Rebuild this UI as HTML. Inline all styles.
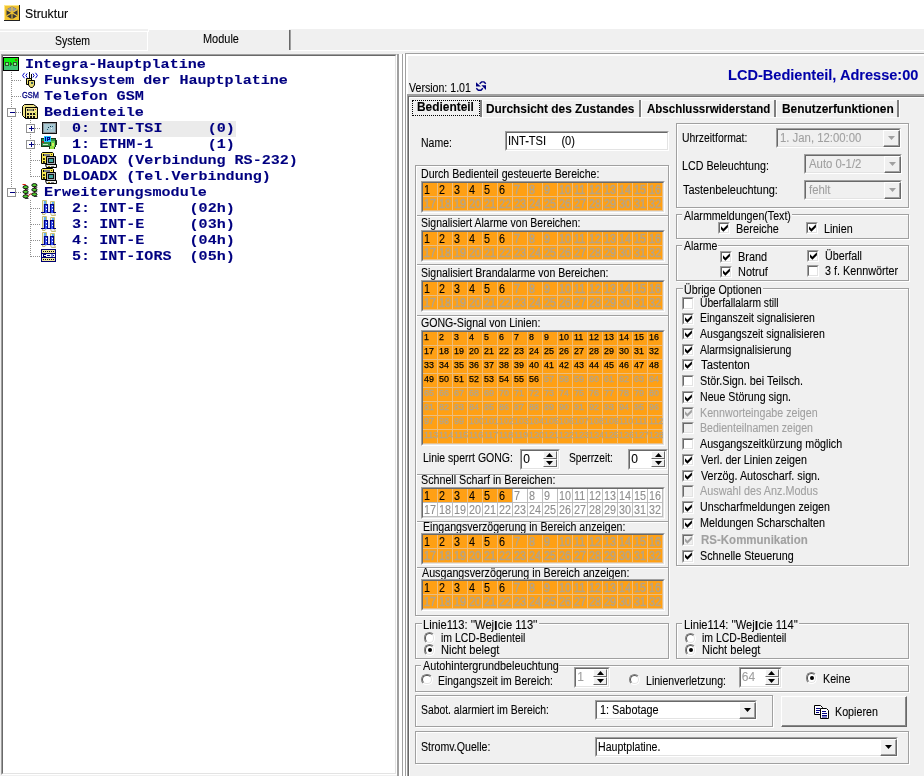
<!DOCTYPE html>
<html><head><meta charset="utf-8"><title>Struktur</title><style>
html,body{margin:0;padding:0}
body{width:924px;height:776px;overflow:hidden;background:#f0f0f0;position:relative;font-family:"Liberation Sans",sans-serif;}
div,span{position:absolute;}
.t{white-space:pre;transform-origin:0 50%;-webkit-text-stroke:0.1px;filter:opacity(.999);}
.g{overflow:hidden;}
.gw{filter:opacity(.999);overflow:hidden;}
.g span{position:absolute;white-space:pre;font-size:12px;line-height:14px;overflow:hidden;-webkit-text-stroke:0.1px;transform:scaleX(0.9);transform-origin:0 0;}

svg{position:absolute;overflow:visible}
</style></head>
<body>
<div style="left:0px;top:0px;width:924px;height:29px;background:#fff"></div>
<svg style="left:4px;top:5px" width="16" height="16" viewBox="0 0 16 16">
<rect x="0" y="0" width="16" height="16" fill="#f2c430"/>
<rect x="15" y="0" width="1" height="16" fill="#222"/><rect x="0" y="15" width="16" height="1" fill="#222"/>
<rect x="0" y="0" width="15" height="1" fill="#ffe88a"/><rect x="0" y="0" width="1" height="15" fill="#ffe88a"/>
<polygon points="8,1.5 13.5,4.5 13.5,11 8,14.2 2.5,11 2.5,4.5" fill="#3a3a3a"/>
<polygon points="8,1.5 13.5,4.5 8,8 2.5,4.5" fill="#9a9a9a"/>
<path d="M8 1.5V14.2M2.5 4.5L13.5 11M13.5 4.5L2.5 11" stroke="#f2c430" stroke-width="1.1" fill="none"/>
</svg>
<span class="t " style="transform:scaleX(1.0009);left:24.599999999999998px;top:7.24px;font-size:12.3px;line-height:15px;color:#000;">Struktur</span>
<div style="left:0px;top:31px;width:148px;height:1px;background:#fff"></div>
<div style="left:147px;top:31px;width:1px;height:19px;background:#fff"></div>
<div style="left:0px;top:50px;width:148px;height:1px;background:#fff"></div>
<div style="left:148px;top:29px;width:141px;height:1px;background:#fff"></div>
<div style="left:148px;top:29px;width:1px;height:3px;background:#fff"></div>
<div style="left:289px;top:30px;width:1px;height:20px;background:#696969"></div>
<div style="left:290px;top:30px;width:1px;height:20px;background:#a0a0a0"></div>
<div style="left:291px;top:50px;width:633px;height:1px;background:#fff"></div>
<span class="t " style="transform:scaleX(0.8747);left:54.900000000000006px;top:33.84px;font-size:12px;line-height:14px;color:#000;">System</span>
<span class="t " style="transform:scaleX(0.9121);left:202.89999999999998px;top:31.84px;font-size:12px;line-height:14px;color:#000;">Module</span>
<div style="left:1px;top:54px;width:396px;height:721px;background:#fff;box-sizing:border-box;border-top:1px solid #a0a0a0;border-left:1px solid #a0a0a0;border-right:1px solid #fff;border-bottom:1px solid #fff;"><div style="left:0;top:0;width:394px;height:719px;box-sizing:border-box;border-top:1px solid #696969;border-left:1px solid #696969;border-right:1px solid #e3e3e3;border-bottom:1px solid #e3e3e3;"></div></div>
<div style="left:397px;top:54px;width:2px;height:722px;background:#a0a0a0"></div>
<div style="left:399px;top:54px;width:3px;height:722px;background:#fff"></div>
<div style="left:402px;top:54px;width:1px;height:722px;background:#a0a0a0"></div>
<div style="left:403px;top:54px;width:2px;height:722px;background:#fff"></div>
<div style="left:405px;top:53px;width:1px;height:723px;background:#a0a0a0"></div>
<div style="left:405px;top:53px;width:519px;height:1px;background:#a0a0a0"></div>
<div style="left:406px;top:54px;width:518px;height:2px;background:#fff"></div>
<div style="left:406px;top:54px;width:2px;height:722px;background:#fff"></div>
<div style="left:60px;top:121px;width:176px;height:15.5px;background:#ebebeb"></div>
<span class="t " style="transform:scaleX(1.1081);left:25px;top:57.38px;font-size:13.6px;line-height:16px;color:#000080;font-family:'Liberation Mono',monospace;font-weight:bold;">Integra-Hauptplatine</span>
<span class="t " style="transform:scaleX(1.1068);left:44px;top:73.38px;font-size:13.6px;line-height:16px;color:#000080;font-family:'Liberation Mono',monospace;font-weight:bold;">Funksystem der Hauptplatine</span>
<span class="t " style="transform:scaleX(1.1122);left:44px;top:89.38px;font-size:13.6px;line-height:16px;color:#000080;font-family:'Liberation Mono',monospace;font-weight:bold;">Telefon GSM</span>
<span class="t " style="transform:scaleX(1.1122);left:44px;top:105.38px;font-size:13.6px;line-height:16px;color:#000080;font-family:'Liberation Mono',monospace;font-weight:bold;">Bedienteile</span>
<span class="t " style="transform:scaleX(1.1087);left:72px;top:121.38px;font-size:13.6px;line-height:16px;color:#000080;font-family:'Liberation Mono',monospace;font-weight:bold;">0: INT-TSI     (0)</span>
<span class="t " style="transform:scaleX(1.1087);left:72px;top:137.38px;font-size:13.6px;line-height:16px;color:#000080;font-family:'Liberation Mono',monospace;font-weight:bold;">1: ETHM-1      (1)</span>
<span class="t " style="transform:scaleX(1.1070);left:63px;top:153.38px;font-size:13.6px;line-height:16px;color:#000080;font-family:'Liberation Mono',monospace;font-weight:bold;">DLOADX (Verbindung RS-232)</span>
<span class="t " style="transform:scaleX(1.1075);left:63px;top:169.38px;font-size:13.6px;line-height:16px;color:#000080;font-family:'Liberation Mono',monospace;font-weight:bold;">DLOADX (Tel.Verbindung)</span>
<span class="t " style="transform:scaleX(1.1087);left:44px;top:185.38px;font-size:13.6px;line-height:16px;color:#000080;font-family:'Liberation Mono',monospace;font-weight:bold;">Erweiterungsmodule</span>
<span class="t " style="transform:scaleX(1.1087);left:72px;top:201.38px;font-size:13.6px;line-height:16px;color:#000080;font-family:'Liberation Mono',monospace;font-weight:bold;">2: INT-E     (02h)</span>
<span class="t " style="transform:scaleX(1.1087);left:72px;top:217.38px;font-size:13.6px;line-height:16px;color:#000080;font-family:'Liberation Mono',monospace;font-weight:bold;">3: INT-E     (03h)</span>
<span class="t " style="transform:scaleX(1.1087);left:72px;top:233.38px;font-size:13.6px;line-height:16px;color:#000080;font-family:'Liberation Mono',monospace;font-weight:bold;">4: INT-E     (04h)</span>
<span class="t " style="transform:scaleX(1.1087);left:72px;top:249.38px;font-size:13.6px;line-height:16px;color:#000080;font-family:'Liberation Mono',monospace;font-weight:bold;">5: INT-IORS  (05h)</span>
<div style="left:11px;top:72px;width:1px;height:116px;background:repeating-linear-gradient(to bottom,#909090 0 1px,transparent 1px 2px)"></div>
<div style="left:12px;top:80px;width:10px;height:1px;background:repeating-linear-gradient(to right,#909090 0 1px,transparent 1px 2px)"></div>
<div style="left:12px;top:96px;width:10px;height:1px;background:repeating-linear-gradient(to right,#909090 0 1px,transparent 1px 2px)"></div>
<div style="left:16px;top:112px;width:6px;height:1px;background:repeating-linear-gradient(to right,#909090 0 1px,transparent 1px 2px)"></div>
<div style="left:16px;top:192px;width:6px;height:1px;background:repeating-linear-gradient(to right,#909090 0 1px,transparent 1px 2px)"></div>
<div style="left:30px;top:120px;width:1px;height:57px;background:repeating-linear-gradient(to bottom,#909090 0 1px,transparent 1px 2px)"></div>
<div style="left:35px;top:128px;width:6px;height:1px;background:repeating-linear-gradient(to right,#909090 0 1px,transparent 1px 2px)"></div>
<div style="left:35px;top:144px;width:6px;height:1px;background:repeating-linear-gradient(to right,#909090 0 1px,transparent 1px 2px)"></div>
<div style="left:31px;top:160px;width:10px;height:1px;background:repeating-linear-gradient(to right,#909090 0 1px,transparent 1px 2px)"></div>
<div style="left:31px;top:176px;width:10px;height:1px;background:repeating-linear-gradient(to right,#909090 0 1px,transparent 1px 2px)"></div>
<div style="left:30px;top:200px;width:1px;height:57px;background:repeating-linear-gradient(to bottom,#909090 0 1px,transparent 1px 2px)"></div>
<div style="left:31px;top:208px;width:10px;height:1px;background:repeating-linear-gradient(to right,#909090 0 1px,transparent 1px 2px)"></div>
<div style="left:31px;top:224px;width:10px;height:1px;background:repeating-linear-gradient(to right,#909090 0 1px,transparent 1px 2px)"></div>
<div style="left:31px;top:240px;width:10px;height:1px;background:repeating-linear-gradient(to right,#909090 0 1px,transparent 1px 2px)"></div>
<div style="left:31px;top:256px;width:10px;height:1px;background:repeating-linear-gradient(to right,#909090 0 1px,transparent 1px 2px)"></div>
<div style="left:7px;top:108px;width:9px;height:9px;box-sizing:border-box;border:1px solid #919191;background:#fff"><div style="left:2px;top:3px;width:5px;height:1px;background:#000080"></div></div>
<div style="left:7px;top:188px;width:9px;height:9px;box-sizing:border-box;border:1px solid #919191;background:#fff"><div style="left:2px;top:3px;width:5px;height:1px;background:#000080"></div></div>
<div style="left:26px;top:124px;width:9px;height:9px;box-sizing:border-box;border:1px solid #919191;background:#fff"><div style="left:2px;top:3px;width:5px;height:1px;background:#000080"></div><div style="left:4px;top:1px;width:1px;height:5px;background:#000080"></div></div>
<div style="left:26px;top:140px;width:9px;height:9px;box-sizing:border-box;border:1px solid #919191;background:#fff"><div style="left:2px;top:3px;width:5px;height:1px;background:#000080"></div><div style="left:4px;top:1px;width:1px;height:5px;background:#000080"></div></div>
<span class="t " style="transform:scaleX(0.8835);left:408.7px;top:80.84px;font-size:12px;line-height:14px;color:#000;">Version: 1.01</span>
<svg style="left:476px;top:81px" width="10" height="10" viewBox="0 0 10 10">
<polygon points="0,1.2 0,5.6 4.8,5.6" fill="#000080"/>
<polygon points="5.4,4.3 10,4.3 10,9" fill="#000080"/>
<path d="M3.6 2.8L5.6 0.9H8L9.8 2.8" stroke="#000080" stroke-width="1.4" fill="none"/>
<path d="M0.3 7.3L2.3 9.3H5L6.8 7.3" stroke="#000080" stroke-width="1.4" fill="none"/>
</svg>
<span class="t " style="transform:scaleX(1.0399);left:727.7px;top:66.65px;font-size:14px;line-height:17px;color:#0000aa;font-weight:bold;">LCD-Bedienteil, Adresse:00</span>
<div style="left:407px;top:94px;width:517px;height:2px;background:#a0a0a0"></div>
<div style="left:408px;top:96px;width:516px;height:1px;background:#787878"></div>
<div style="left:409px;top:97px;width:515px;height:1px;background:#fff"></div>
<div style="left:407px;top:94px;width:1px;height:682px;background:#a0a0a0"></div>
<div style="left:408px;top:96px;width:1px;height:680px;background:#696969"></div>
<div style="left:409px;top:97px;width:1px;height:679px;background:#fff"></div>
<div style="left:483px;top:100px;width:414px;height:1px;background:#f9f9f9"></div>
<div style="left:483px;top:117px;width:414px;height:1px;background:#fbfbfb"></div>
<div style="left:480px;top:100px;width:2px;height:17px;background:#808080"></div>
<div style="left:482px;top:100px;width:1px;height:18px;background:#fff"></div>
<div style="left:639px;top:100px;width:2px;height:17px;background:#808080"></div>
<div style="left:641px;top:100px;width:1px;height:18px;background:#fff"></div>
<div style="left:774px;top:100px;width:2px;height:17px;background:#808080"></div>
<div style="left:776px;top:100px;width:1px;height:18px;background:#fff"></div>
<div style="left:897px;top:100px;width:2px;height:17px;background:#808080"></div>
<div style="left:899px;top:100px;width:1px;height:18px;background:#fff"></div>
<span class="t " style="transform:scaleX(0.9920);left:417.2px;top:99.84px;font-size:12px;line-height:14px;color:#000;font-weight:bold;">Bedienteil</span>
<span class="t " style="transform:scaleX(0.9890);left:486.2px;top:101.84px;font-size:12px;line-height:14px;color:#000;font-weight:bold;">Durchsicht des Zustandes</span>
<span class="t " style="transform:scaleX(0.9588);left:647.2px;top:101.84px;font-size:12px;line-height:14px;color:#000;font-weight:bold;">Abschlussrwiderstand</span>
<span class="t " style="transform:scaleX(0.9914);left:781.6px;top:101.84px;font-size:12px;line-height:14px;color:#000;font-weight:bold;">Benutzerfunktionen</span>
<div style="left:412px;top:100px;width:68px;height:16px;box-sizing:border-box;border:1px dotted #000"></div>
<span class="t " style="transform:scaleX(0.8743);left:421.2px;top:135.84px;font-size:12px;line-height:14px;color:#000;">Name:</span>
<div style="left:505px;top:131px;width:164px;height:20px;background:#fff;box-sizing:border-box;border-top:1px solid #a0a0a0;border-left:1px solid #a0a0a0;border-right:1px solid #fff;border-bottom:1px solid #fff;"><div style="left:0;top:0;width:162px;height:18px;box-sizing:border-box;border-top:1px solid #696969;border-left:1px solid #696969;border-right:1px solid #e3e3e3;border-bottom:1px solid #e3e3e3;"></div></div>
<span class="t " style="transform:scaleX(0.9206);left:508.2px;top:133.84px;font-size:12px;line-height:14px;color:#000;">INT-TSI     (0)</span>
<div style="left:415px;top:165px;width:254px;height:451px;border:1px solid #a0a0a0;box-sizing:border-box"></div>
<div style="left:416px;top:166px;width:254px;height:451px;border:1px solid #fff;box-sizing:border-box"></div>
<div style="left:415px;top:165px;width:254px;height:451px;border:1px solid #a0a0a0;box-sizing:border-box"></div>
<div style="left:417px;top:215px;width:251px;height:1px;background:#a0a0a0"></div>
<div style="left:417px;top:216px;width:251px;height:1px;background:#fff"></div>
<div style="left:417px;top:264px;width:251px;height:1px;background:#a0a0a0"></div>
<div style="left:417px;top:265px;width:251px;height:1px;background:#fff"></div>
<div style="left:417px;top:315px;width:251px;height:1px;background:#a0a0a0"></div>
<div style="left:417px;top:316px;width:251px;height:1px;background:#fff"></div>
<div style="left:417px;top:474px;width:251px;height:1px;background:#a0a0a0"></div>
<div style="left:417px;top:475px;width:251px;height:1px;background:#fff"></div>
<div style="left:417px;top:521px;width:251px;height:1px;background:#a0a0a0"></div>
<div style="left:417px;top:522px;width:251px;height:1px;background:#fff"></div>
<div style="left:417px;top:566.5px;width:251px;height:1px;background:#a0a0a0"></div>
<div style="left:417px;top:567.5px;width:251px;height:1px;background:#fff"></div>
<span class="t " style="transform:scaleX(0.8826);left:421.2px;top:166.84px;font-size:12px;line-height:14px;color:#000;">Durch Bedienteil gesteuerte Bereiche:</span>
<div style="left:421px;top:181px;width:244px;height:32px;background:#ffa014;box-sizing:border-box;border-top:1px solid #a0a0a0;border-left:1px solid #a0a0a0;border-right:1px solid #fff;border-bottom:1px solid #fff;"><div style="left:0;top:0;width:242px;height:30px;box-sizing:border-box;border-top:1px solid #696969;border-left:1px solid #696969;border-right:1px solid #e3e3e3;border-bottom:1px solid #e3e3e3;"></div><div class="g" style="left:1px;top:1px;width:240px;height:28px;background:repeating-linear-gradient(to right,transparent 0 14px,#ebbd80 14px 15px),repeating-linear-gradient(to bottom,transparent 0 13px,#ebbd80 13px 14px),#ffa014;"><div class="gw" style="left:0;top:0;width:240px;height:28px"><span style="left:1.2px;top:1px;width:14.4px;height:13px;line-height:13px;color:#000;">1</span><span style="left:16.2px;top:1px;width:14.4px;height:13px;line-height:13px;color:#000;">2</span><span style="left:31.2px;top:1px;width:14.4px;height:13px;line-height:13px;color:#000;">3</span><span style="left:46.2px;top:1px;width:14.4px;height:13px;line-height:13px;color:#000;">4</span><span style="left:61.2px;top:1px;width:14.4px;height:13px;line-height:13px;color:#000;">5</span><span style="left:76.2px;top:1px;width:14.4px;height:13px;line-height:13px;color:#000;">6</span><span style="left:91.2px;top:1px;width:14.4px;height:13px;line-height:13px;color:#b6a486;-webkit-text-stroke:0.45px;">7</span><span style="left:106.2px;top:1px;width:14.4px;height:13px;line-height:13px;color:#b6a486;-webkit-text-stroke:0.45px;">8</span><span style="left:121.2px;top:1px;width:14.4px;height:13px;line-height:13px;color:#b6a486;-webkit-text-stroke:0.45px;">9</span><span style="left:136.2px;top:1px;width:14.4px;height:13px;line-height:13px;color:#b6a486;-webkit-text-stroke:0.45px;">10</span><span style="left:151.2px;top:1px;width:14.4px;height:13px;line-height:13px;color:#b6a486;-webkit-text-stroke:0.45px;">11</span><span style="left:166.2px;top:1px;width:14.4px;height:13px;line-height:13px;color:#b6a486;-webkit-text-stroke:0.45px;">12</span><span style="left:181.2px;top:1px;width:14.4px;height:13px;line-height:13px;color:#b6a486;-webkit-text-stroke:0.45px;">13</span><span style="left:196.2px;top:1px;width:14.4px;height:13px;line-height:13px;color:#b6a486;-webkit-text-stroke:0.45px;">14</span><span style="left:211.2px;top:1px;width:14.4px;height:13px;line-height:13px;color:#b6a486;-webkit-text-stroke:0.45px;">15</span><span style="left:226.2px;top:1px;width:14.4px;height:13px;line-height:13px;color:#b6a486;-webkit-text-stroke:0.45px;">16</span><span style="left:1.2px;top:15px;width:14.4px;height:13px;line-height:13px;color:#b6a486;-webkit-text-stroke:0.45px;">17</span><span style="left:16.2px;top:15px;width:14.4px;height:13px;line-height:13px;color:#b6a486;-webkit-text-stroke:0.45px;">18</span><span style="left:31.2px;top:15px;width:14.4px;height:13px;line-height:13px;color:#b6a486;-webkit-text-stroke:0.45px;">19</span><span style="left:46.2px;top:15px;width:14.4px;height:13px;line-height:13px;color:#b6a486;-webkit-text-stroke:0.45px;">20</span><span style="left:61.2px;top:15px;width:14.4px;height:13px;line-height:13px;color:#b6a486;-webkit-text-stroke:0.45px;">21</span><span style="left:76.2px;top:15px;width:14.4px;height:13px;line-height:13px;color:#b6a486;-webkit-text-stroke:0.45px;">22</span><span style="left:91.2px;top:15px;width:14.4px;height:13px;line-height:13px;color:#b6a486;-webkit-text-stroke:0.45px;">23</span><span style="left:106.2px;top:15px;width:14.4px;height:13px;line-height:13px;color:#b6a486;-webkit-text-stroke:0.45px;">24</span><span style="left:121.2px;top:15px;width:14.4px;height:13px;line-height:13px;color:#b6a486;-webkit-text-stroke:0.45px;">25</span><span style="left:136.2px;top:15px;width:14.4px;height:13px;line-height:13px;color:#b6a486;-webkit-text-stroke:0.45px;">26</span><span style="left:151.2px;top:15px;width:14.4px;height:13px;line-height:13px;color:#b6a486;-webkit-text-stroke:0.45px;">27</span><span style="left:166.2px;top:15px;width:14.4px;height:13px;line-height:13px;color:#b6a486;-webkit-text-stroke:0.45px;">28</span><span style="left:181.2px;top:15px;width:14.4px;height:13px;line-height:13px;color:#b6a486;-webkit-text-stroke:0.45px;">29</span><span style="left:196.2px;top:15px;width:14.4px;height:13px;line-height:13px;color:#b6a486;-webkit-text-stroke:0.45px;">30</span><span style="left:211.2px;top:15px;width:14.4px;height:13px;line-height:13px;color:#b6a486;-webkit-text-stroke:0.45px;">31</span><span style="left:226.2px;top:15px;width:14.4px;height:13px;line-height:13px;color:#b6a486;-webkit-text-stroke:0.45px;">32</span></div></div></div>
<span class="t " style="transform:scaleX(0.8722);left:421.2px;top:215.84px;font-size:12px;line-height:14px;color:#000;">Signalisiert Alarme von Bereichen:</span>
<div style="left:421px;top:230px;width:244px;height:32px;background:#ffa014;box-sizing:border-box;border-top:1px solid #a0a0a0;border-left:1px solid #a0a0a0;border-right:1px solid #fff;border-bottom:1px solid #fff;"><div style="left:0;top:0;width:242px;height:30px;box-sizing:border-box;border-top:1px solid #696969;border-left:1px solid #696969;border-right:1px solid #e3e3e3;border-bottom:1px solid #e3e3e3;"></div><div class="g" style="left:1px;top:1px;width:240px;height:28px;background:repeating-linear-gradient(to right,transparent 0 14px,#ebbd80 14px 15px),repeating-linear-gradient(to bottom,transparent 0 13px,#ebbd80 13px 14px),#ffa014;"><div class="gw" style="left:0;top:0;width:240px;height:28px"><span style="left:1.2px;top:1px;width:14.4px;height:13px;line-height:13px;color:#000;">1</span><span style="left:16.2px;top:1px;width:14.4px;height:13px;line-height:13px;color:#000;">2</span><span style="left:31.2px;top:1px;width:14.4px;height:13px;line-height:13px;color:#000;">3</span><span style="left:46.2px;top:1px;width:14.4px;height:13px;line-height:13px;color:#000;">4</span><span style="left:61.2px;top:1px;width:14.4px;height:13px;line-height:13px;color:#000;">5</span><span style="left:76.2px;top:1px;width:14.4px;height:13px;line-height:13px;color:#000;">6</span><span style="left:91.2px;top:1px;width:14.4px;height:13px;line-height:13px;color:#b6a486;-webkit-text-stroke:0.45px;">7</span><span style="left:106.2px;top:1px;width:14.4px;height:13px;line-height:13px;color:#b6a486;-webkit-text-stroke:0.45px;">8</span><span style="left:121.2px;top:1px;width:14.4px;height:13px;line-height:13px;color:#b6a486;-webkit-text-stroke:0.45px;">9</span><span style="left:136.2px;top:1px;width:14.4px;height:13px;line-height:13px;color:#b6a486;-webkit-text-stroke:0.45px;">10</span><span style="left:151.2px;top:1px;width:14.4px;height:13px;line-height:13px;color:#b6a486;-webkit-text-stroke:0.45px;">11</span><span style="left:166.2px;top:1px;width:14.4px;height:13px;line-height:13px;color:#b6a486;-webkit-text-stroke:0.45px;">12</span><span style="left:181.2px;top:1px;width:14.4px;height:13px;line-height:13px;color:#b6a486;-webkit-text-stroke:0.45px;">13</span><span style="left:196.2px;top:1px;width:14.4px;height:13px;line-height:13px;color:#b6a486;-webkit-text-stroke:0.45px;">14</span><span style="left:211.2px;top:1px;width:14.4px;height:13px;line-height:13px;color:#b6a486;-webkit-text-stroke:0.45px;">15</span><span style="left:226.2px;top:1px;width:14.4px;height:13px;line-height:13px;color:#b6a486;-webkit-text-stroke:0.45px;">16</span><span style="left:1.2px;top:15px;width:14.4px;height:13px;line-height:13px;color:#b6a486;-webkit-text-stroke:0.45px;">17</span><span style="left:16.2px;top:15px;width:14.4px;height:13px;line-height:13px;color:#b6a486;-webkit-text-stroke:0.45px;">18</span><span style="left:31.2px;top:15px;width:14.4px;height:13px;line-height:13px;color:#b6a486;-webkit-text-stroke:0.45px;">19</span><span style="left:46.2px;top:15px;width:14.4px;height:13px;line-height:13px;color:#b6a486;-webkit-text-stroke:0.45px;">20</span><span style="left:61.2px;top:15px;width:14.4px;height:13px;line-height:13px;color:#b6a486;-webkit-text-stroke:0.45px;">21</span><span style="left:76.2px;top:15px;width:14.4px;height:13px;line-height:13px;color:#b6a486;-webkit-text-stroke:0.45px;">22</span><span style="left:91.2px;top:15px;width:14.4px;height:13px;line-height:13px;color:#b6a486;-webkit-text-stroke:0.45px;">23</span><span style="left:106.2px;top:15px;width:14.4px;height:13px;line-height:13px;color:#b6a486;-webkit-text-stroke:0.45px;">24</span><span style="left:121.2px;top:15px;width:14.4px;height:13px;line-height:13px;color:#b6a486;-webkit-text-stroke:0.45px;">25</span><span style="left:136.2px;top:15px;width:14.4px;height:13px;line-height:13px;color:#b6a486;-webkit-text-stroke:0.45px;">26</span><span style="left:151.2px;top:15px;width:14.4px;height:13px;line-height:13px;color:#b6a486;-webkit-text-stroke:0.45px;">27</span><span style="left:166.2px;top:15px;width:14.4px;height:13px;line-height:13px;color:#b6a486;-webkit-text-stroke:0.45px;">28</span><span style="left:181.2px;top:15px;width:14.4px;height:13px;line-height:13px;color:#b6a486;-webkit-text-stroke:0.45px;">29</span><span style="left:196.2px;top:15px;width:14.4px;height:13px;line-height:13px;color:#b6a486;-webkit-text-stroke:0.45px;">30</span><span style="left:211.2px;top:15px;width:14.4px;height:13px;line-height:13px;color:#b6a486;-webkit-text-stroke:0.45px;">31</span><span style="left:226.2px;top:15px;width:14.4px;height:13px;line-height:13px;color:#b6a486;-webkit-text-stroke:0.45px;">32</span></div></div></div>
<span class="t " style="transform:scaleX(0.8752);left:421.2px;top:265.84px;font-size:12px;line-height:14px;color:#000;">Signalisiert Brandalarme von Bereichen:</span>
<div style="left:421px;top:280px;width:244px;height:32px;background:#ffa014;box-sizing:border-box;border-top:1px solid #a0a0a0;border-left:1px solid #a0a0a0;border-right:1px solid #fff;border-bottom:1px solid #fff;"><div style="left:0;top:0;width:242px;height:30px;box-sizing:border-box;border-top:1px solid #696969;border-left:1px solid #696969;border-right:1px solid #e3e3e3;border-bottom:1px solid #e3e3e3;"></div><div class="g" style="left:1px;top:1px;width:240px;height:28px;background:repeating-linear-gradient(to right,transparent 0 14px,#ebbd80 14px 15px),repeating-linear-gradient(to bottom,transparent 0 13px,#ebbd80 13px 14px),#ffa014;"><div class="gw" style="left:0;top:0;width:240px;height:28px"><span style="left:1.2px;top:1px;width:14.4px;height:13px;line-height:13px;color:#000;">1</span><span style="left:16.2px;top:1px;width:14.4px;height:13px;line-height:13px;color:#000;">2</span><span style="left:31.2px;top:1px;width:14.4px;height:13px;line-height:13px;color:#000;">3</span><span style="left:46.2px;top:1px;width:14.4px;height:13px;line-height:13px;color:#000;">4</span><span style="left:61.2px;top:1px;width:14.4px;height:13px;line-height:13px;color:#000;">5</span><span style="left:76.2px;top:1px;width:14.4px;height:13px;line-height:13px;color:#000;">6</span><span style="left:91.2px;top:1px;width:14.4px;height:13px;line-height:13px;color:#b6a486;-webkit-text-stroke:0.45px;">7</span><span style="left:106.2px;top:1px;width:14.4px;height:13px;line-height:13px;color:#b6a486;-webkit-text-stroke:0.45px;">8</span><span style="left:121.2px;top:1px;width:14.4px;height:13px;line-height:13px;color:#b6a486;-webkit-text-stroke:0.45px;">9</span><span style="left:136.2px;top:1px;width:14.4px;height:13px;line-height:13px;color:#b6a486;-webkit-text-stroke:0.45px;">10</span><span style="left:151.2px;top:1px;width:14.4px;height:13px;line-height:13px;color:#b6a486;-webkit-text-stroke:0.45px;">11</span><span style="left:166.2px;top:1px;width:14.4px;height:13px;line-height:13px;color:#b6a486;-webkit-text-stroke:0.45px;">12</span><span style="left:181.2px;top:1px;width:14.4px;height:13px;line-height:13px;color:#b6a486;-webkit-text-stroke:0.45px;">13</span><span style="left:196.2px;top:1px;width:14.4px;height:13px;line-height:13px;color:#b6a486;-webkit-text-stroke:0.45px;">14</span><span style="left:211.2px;top:1px;width:14.4px;height:13px;line-height:13px;color:#b6a486;-webkit-text-stroke:0.45px;">15</span><span style="left:226.2px;top:1px;width:14.4px;height:13px;line-height:13px;color:#b6a486;-webkit-text-stroke:0.45px;">16</span><span style="left:1.2px;top:15px;width:14.4px;height:13px;line-height:13px;color:#b6a486;-webkit-text-stroke:0.45px;">17</span><span style="left:16.2px;top:15px;width:14.4px;height:13px;line-height:13px;color:#b6a486;-webkit-text-stroke:0.45px;">18</span><span style="left:31.2px;top:15px;width:14.4px;height:13px;line-height:13px;color:#b6a486;-webkit-text-stroke:0.45px;">19</span><span style="left:46.2px;top:15px;width:14.4px;height:13px;line-height:13px;color:#b6a486;-webkit-text-stroke:0.45px;">20</span><span style="left:61.2px;top:15px;width:14.4px;height:13px;line-height:13px;color:#b6a486;-webkit-text-stroke:0.45px;">21</span><span style="left:76.2px;top:15px;width:14.4px;height:13px;line-height:13px;color:#b6a486;-webkit-text-stroke:0.45px;">22</span><span style="left:91.2px;top:15px;width:14.4px;height:13px;line-height:13px;color:#b6a486;-webkit-text-stroke:0.45px;">23</span><span style="left:106.2px;top:15px;width:14.4px;height:13px;line-height:13px;color:#b6a486;-webkit-text-stroke:0.45px;">24</span><span style="left:121.2px;top:15px;width:14.4px;height:13px;line-height:13px;color:#b6a486;-webkit-text-stroke:0.45px;">25</span><span style="left:136.2px;top:15px;width:14.4px;height:13px;line-height:13px;color:#b6a486;-webkit-text-stroke:0.45px;">26</span><span style="left:151.2px;top:15px;width:14.4px;height:13px;line-height:13px;color:#b6a486;-webkit-text-stroke:0.45px;">27</span><span style="left:166.2px;top:15px;width:14.4px;height:13px;line-height:13px;color:#b6a486;-webkit-text-stroke:0.45px;">28</span><span style="left:181.2px;top:15px;width:14.4px;height:13px;line-height:13px;color:#b6a486;-webkit-text-stroke:0.45px;">29</span><span style="left:196.2px;top:15px;width:14.4px;height:13px;line-height:13px;color:#b6a486;-webkit-text-stroke:0.45px;">30</span><span style="left:211.2px;top:15px;width:14.4px;height:13px;line-height:13px;color:#b6a486;-webkit-text-stroke:0.45px;">31</span><span style="left:226.2px;top:15px;width:14.4px;height:13px;line-height:13px;color:#b6a486;-webkit-text-stroke:0.45px;">32</span></div></div></div>
<span class="t " style="transform:scaleX(0.8818);left:421.2px;top:315.84px;font-size:12px;line-height:14px;color:#000;">GONG-Signal von Linien:</span>
<div style="left:421px;top:330px;width:244px;height:116px;background:#ffa014;box-sizing:border-box;border-top:1px solid #a0a0a0;border-left:1px solid #a0a0a0;border-right:1px solid #fff;border-bottom:1px solid #fff;"><div style="left:0;top:0;width:242px;height:114px;box-sizing:border-box;border-top:1px solid #696969;border-left:1px solid #696969;border-right:1px solid #e3e3e3;border-bottom:1px solid #e3e3e3;"></div><div class="g" style="left:1px;top:1px;width:240px;height:112px;background:repeating-linear-gradient(to right,transparent 0 14px,#ebbd80 14px 15px),repeating-linear-gradient(to bottom,transparent 0 13px,#ebbd80 13px 14px),#ffa014;"><div class="gw" style="left:0;top:0;width:240px;height:112px"><span style="left:1.2px;top:-1.8px;width:14.4px;height:13px;line-height:13px;color:#000;font-size:9.9px;transform:scaleX(0.9);width:15.6px;-webkit-text-stroke:0.25px;">1</span><span style="left:16.2px;top:-1.8px;width:14.4px;height:13px;line-height:13px;color:#000;font-size:9.9px;transform:scaleX(0.9);width:15.6px;-webkit-text-stroke:0.25px;">2</span><span style="left:31.2px;top:-1.8px;width:14.4px;height:13px;line-height:13px;color:#000;font-size:9.9px;transform:scaleX(0.9);width:15.6px;-webkit-text-stroke:0.25px;">3</span><span style="left:46.2px;top:-1.8px;width:14.4px;height:13px;line-height:13px;color:#000;font-size:9.9px;transform:scaleX(0.9);width:15.6px;-webkit-text-stroke:0.25px;">4</span><span style="left:61.2px;top:-1.8px;width:14.4px;height:13px;line-height:13px;color:#000;font-size:9.9px;transform:scaleX(0.9);width:15.6px;-webkit-text-stroke:0.25px;">5</span><span style="left:76.2px;top:-1.8px;width:14.4px;height:13px;line-height:13px;color:#000;font-size:9.9px;transform:scaleX(0.9);width:15.6px;-webkit-text-stroke:0.25px;">6</span><span style="left:91.2px;top:-1.8px;width:14.4px;height:13px;line-height:13px;color:#000;font-size:9.9px;transform:scaleX(0.9);width:15.6px;-webkit-text-stroke:0.25px;">7</span><span style="left:106.2px;top:-1.8px;width:14.4px;height:13px;line-height:13px;color:#000;font-size:9.9px;transform:scaleX(0.9);width:15.6px;-webkit-text-stroke:0.25px;">8</span><span style="left:121.2px;top:-1.8px;width:14.4px;height:13px;line-height:13px;color:#000;font-size:9.9px;transform:scaleX(0.9);width:15.6px;-webkit-text-stroke:0.25px;">9</span><span style="left:136.2px;top:-1.8px;width:14.4px;height:13px;line-height:13px;color:#000;font-size:9.9px;transform:scaleX(0.9);width:15.6px;-webkit-text-stroke:0.25px;">10</span><span style="left:151.2px;top:-1.8px;width:14.4px;height:13px;line-height:13px;color:#000;font-size:9.9px;transform:scaleX(0.9);width:15.6px;-webkit-text-stroke:0.25px;">11</span><span style="left:166.2px;top:-1.8px;width:14.4px;height:13px;line-height:13px;color:#000;font-size:9.9px;transform:scaleX(0.9);width:15.6px;-webkit-text-stroke:0.25px;">12</span><span style="left:181.2px;top:-1.8px;width:14.4px;height:13px;line-height:13px;color:#000;font-size:9.9px;transform:scaleX(0.9);width:15.6px;-webkit-text-stroke:0.25px;">13</span><span style="left:196.2px;top:-1.8px;width:14.4px;height:13px;line-height:13px;color:#000;font-size:9.9px;transform:scaleX(0.9);width:15.6px;-webkit-text-stroke:0.25px;">14</span><span style="left:211.2px;top:-1.8px;width:14.4px;height:13px;line-height:13px;color:#000;font-size:9.9px;transform:scaleX(0.9);width:15.6px;-webkit-text-stroke:0.25px;">15</span><span style="left:226.2px;top:-1.8px;width:14.4px;height:13px;line-height:13px;color:#000;font-size:9.9px;transform:scaleX(0.9);width:15.6px;-webkit-text-stroke:0.25px;">16</span><span style="left:1.2px;top:12.2px;width:14.4px;height:13px;line-height:13px;color:#000;font-size:9.9px;transform:scaleX(0.9);width:15.6px;-webkit-text-stroke:0.25px;">17</span><span style="left:16.2px;top:12.2px;width:14.4px;height:13px;line-height:13px;color:#000;font-size:9.9px;transform:scaleX(0.9);width:15.6px;-webkit-text-stroke:0.25px;">18</span><span style="left:31.2px;top:12.2px;width:14.4px;height:13px;line-height:13px;color:#000;font-size:9.9px;transform:scaleX(0.9);width:15.6px;-webkit-text-stroke:0.25px;">19</span><span style="left:46.2px;top:12.2px;width:14.4px;height:13px;line-height:13px;color:#000;font-size:9.9px;transform:scaleX(0.9);width:15.6px;-webkit-text-stroke:0.25px;">20</span><span style="left:61.2px;top:12.2px;width:14.4px;height:13px;line-height:13px;color:#000;font-size:9.9px;transform:scaleX(0.9);width:15.6px;-webkit-text-stroke:0.25px;">21</span><span style="left:76.2px;top:12.2px;width:14.4px;height:13px;line-height:13px;color:#000;font-size:9.9px;transform:scaleX(0.9);width:15.6px;-webkit-text-stroke:0.25px;">22</span><span style="left:91.2px;top:12.2px;width:14.4px;height:13px;line-height:13px;color:#000;font-size:9.9px;transform:scaleX(0.9);width:15.6px;-webkit-text-stroke:0.25px;">23</span><span style="left:106.2px;top:12.2px;width:14.4px;height:13px;line-height:13px;color:#000;font-size:9.9px;transform:scaleX(0.9);width:15.6px;-webkit-text-stroke:0.25px;">24</span><span style="left:121.2px;top:12.2px;width:14.4px;height:13px;line-height:13px;color:#000;font-size:9.9px;transform:scaleX(0.9);width:15.6px;-webkit-text-stroke:0.25px;">25</span><span style="left:136.2px;top:12.2px;width:14.4px;height:13px;line-height:13px;color:#000;font-size:9.9px;transform:scaleX(0.9);width:15.6px;-webkit-text-stroke:0.25px;">26</span><span style="left:151.2px;top:12.2px;width:14.4px;height:13px;line-height:13px;color:#000;font-size:9.9px;transform:scaleX(0.9);width:15.6px;-webkit-text-stroke:0.25px;">27</span><span style="left:166.2px;top:12.2px;width:14.4px;height:13px;line-height:13px;color:#000;font-size:9.9px;transform:scaleX(0.9);width:15.6px;-webkit-text-stroke:0.25px;">28</span><span style="left:181.2px;top:12.2px;width:14.4px;height:13px;line-height:13px;color:#000;font-size:9.9px;transform:scaleX(0.9);width:15.6px;-webkit-text-stroke:0.25px;">29</span><span style="left:196.2px;top:12.2px;width:14.4px;height:13px;line-height:13px;color:#000;font-size:9.9px;transform:scaleX(0.9);width:15.6px;-webkit-text-stroke:0.25px;">30</span><span style="left:211.2px;top:12.2px;width:14.4px;height:13px;line-height:13px;color:#000;font-size:9.9px;transform:scaleX(0.9);width:15.6px;-webkit-text-stroke:0.25px;">31</span><span style="left:226.2px;top:12.2px;width:14.4px;height:13px;line-height:13px;color:#000;font-size:9.9px;transform:scaleX(0.9);width:15.6px;-webkit-text-stroke:0.25px;">32</span><span style="left:1.2px;top:26.2px;width:14.4px;height:13px;line-height:13px;color:#000;font-size:9.9px;transform:scaleX(0.9);width:15.6px;-webkit-text-stroke:0.25px;">33</span><span style="left:16.2px;top:26.2px;width:14.4px;height:13px;line-height:13px;color:#000;font-size:9.9px;transform:scaleX(0.9);width:15.6px;-webkit-text-stroke:0.25px;">34</span><span style="left:31.2px;top:26.2px;width:14.4px;height:13px;line-height:13px;color:#000;font-size:9.9px;transform:scaleX(0.9);width:15.6px;-webkit-text-stroke:0.25px;">35</span><span style="left:46.2px;top:26.2px;width:14.4px;height:13px;line-height:13px;color:#000;font-size:9.9px;transform:scaleX(0.9);width:15.6px;-webkit-text-stroke:0.25px;">36</span><span style="left:61.2px;top:26.2px;width:14.4px;height:13px;line-height:13px;color:#000;font-size:9.9px;transform:scaleX(0.9);width:15.6px;-webkit-text-stroke:0.25px;">37</span><span style="left:76.2px;top:26.2px;width:14.4px;height:13px;line-height:13px;color:#000;font-size:9.9px;transform:scaleX(0.9);width:15.6px;-webkit-text-stroke:0.25px;">38</span><span style="left:91.2px;top:26.2px;width:14.4px;height:13px;line-height:13px;color:#000;font-size:9.9px;transform:scaleX(0.9);width:15.6px;-webkit-text-stroke:0.25px;">39</span><span style="left:106.2px;top:26.2px;width:14.4px;height:13px;line-height:13px;color:#000;font-size:9.9px;transform:scaleX(0.9);width:15.6px;-webkit-text-stroke:0.25px;">40</span><span style="left:121.2px;top:26.2px;width:14.4px;height:13px;line-height:13px;color:#000;font-size:9.9px;transform:scaleX(0.9);width:15.6px;-webkit-text-stroke:0.25px;">41</span><span style="left:136.2px;top:26.2px;width:14.4px;height:13px;line-height:13px;color:#000;font-size:9.9px;transform:scaleX(0.9);width:15.6px;-webkit-text-stroke:0.25px;">42</span><span style="left:151.2px;top:26.2px;width:14.4px;height:13px;line-height:13px;color:#000;font-size:9.9px;transform:scaleX(0.9);width:15.6px;-webkit-text-stroke:0.25px;">43</span><span style="left:166.2px;top:26.2px;width:14.4px;height:13px;line-height:13px;color:#000;font-size:9.9px;transform:scaleX(0.9);width:15.6px;-webkit-text-stroke:0.25px;">44</span><span style="left:181.2px;top:26.2px;width:14.4px;height:13px;line-height:13px;color:#000;font-size:9.9px;transform:scaleX(0.9);width:15.6px;-webkit-text-stroke:0.25px;">45</span><span style="left:196.2px;top:26.2px;width:14.4px;height:13px;line-height:13px;color:#000;font-size:9.9px;transform:scaleX(0.9);width:15.6px;-webkit-text-stroke:0.25px;">46</span><span style="left:211.2px;top:26.2px;width:14.4px;height:13px;line-height:13px;color:#000;font-size:9.9px;transform:scaleX(0.9);width:15.6px;-webkit-text-stroke:0.25px;">47</span><span style="left:226.2px;top:26.2px;width:14.4px;height:13px;line-height:13px;color:#000;font-size:9.9px;transform:scaleX(0.9);width:15.6px;-webkit-text-stroke:0.25px;">48</span><span style="left:1.2px;top:40.2px;width:14.4px;height:13px;line-height:13px;color:#000;font-size:9.9px;transform:scaleX(0.9);width:15.6px;-webkit-text-stroke:0.25px;">49</span><span style="left:16.2px;top:40.2px;width:14.4px;height:13px;line-height:13px;color:#000;font-size:9.9px;transform:scaleX(0.9);width:15.6px;-webkit-text-stroke:0.25px;">50</span><span style="left:31.2px;top:40.2px;width:14.4px;height:13px;line-height:13px;color:#000;font-size:9.9px;transform:scaleX(0.9);width:15.6px;-webkit-text-stroke:0.25px;">51</span><span style="left:46.2px;top:40.2px;width:14.4px;height:13px;line-height:13px;color:#000;font-size:9.9px;transform:scaleX(0.9);width:15.6px;-webkit-text-stroke:0.25px;">52</span><span style="left:61.2px;top:40.2px;width:14.4px;height:13px;line-height:13px;color:#000;font-size:9.9px;transform:scaleX(0.9);width:15.6px;-webkit-text-stroke:0.25px;">53</span><span style="left:76.2px;top:40.2px;width:14.4px;height:13px;line-height:13px;color:#000;font-size:9.9px;transform:scaleX(0.9);width:15.6px;-webkit-text-stroke:0.25px;">54</span><span style="left:91.2px;top:40.2px;width:14.4px;height:13px;line-height:13px;color:#000;font-size:9.9px;transform:scaleX(0.9);width:15.6px;-webkit-text-stroke:0.25px;">55</span><span style="left:106.2px;top:40.2px;width:14.4px;height:13px;line-height:13px;color:#000;font-size:9.9px;transform:scaleX(0.9);width:15.6px;-webkit-text-stroke:0.25px;">56</span><span style="left:121.2px;top:40.2px;width:14.4px;height:13px;line-height:13px;color:#b6a486;-webkit-text-stroke:0.45px;font-size:9.9px;transform:scaleX(0.9);width:15.6px;-webkit-text-stroke:0.35px;">57</span><span style="left:136.2px;top:40.2px;width:14.4px;height:13px;line-height:13px;color:#b6a486;-webkit-text-stroke:0.45px;font-size:9.9px;transform:scaleX(0.9);width:15.6px;-webkit-text-stroke:0.35px;">58</span><span style="left:151.2px;top:40.2px;width:14.4px;height:13px;line-height:13px;color:#b6a486;-webkit-text-stroke:0.45px;font-size:9.9px;transform:scaleX(0.9);width:15.6px;-webkit-text-stroke:0.35px;">59</span><span style="left:166.2px;top:40.2px;width:14.4px;height:13px;line-height:13px;color:#b6a486;-webkit-text-stroke:0.45px;font-size:9.9px;transform:scaleX(0.9);width:15.6px;-webkit-text-stroke:0.35px;">60</span><span style="left:181.2px;top:40.2px;width:14.4px;height:13px;line-height:13px;color:#b6a486;-webkit-text-stroke:0.45px;font-size:9.9px;transform:scaleX(0.9);width:15.6px;-webkit-text-stroke:0.35px;">61</span><span style="left:196.2px;top:40.2px;width:14.4px;height:13px;line-height:13px;color:#b6a486;-webkit-text-stroke:0.45px;font-size:9.9px;transform:scaleX(0.9);width:15.6px;-webkit-text-stroke:0.35px;">62</span><span style="left:211.2px;top:40.2px;width:14.4px;height:13px;line-height:13px;color:#b6a486;-webkit-text-stroke:0.45px;font-size:9.9px;transform:scaleX(0.9);width:15.6px;-webkit-text-stroke:0.35px;">63</span><span style="left:226.2px;top:40.2px;width:14.4px;height:13px;line-height:13px;color:#b6a486;-webkit-text-stroke:0.45px;font-size:9.9px;transform:scaleX(0.9);width:15.6px;-webkit-text-stroke:0.35px;">64</span><span style="left:1.2px;top:54.2px;width:14.4px;height:13px;line-height:13px;color:#b6a486;-webkit-text-stroke:0.45px;font-size:9.9px;transform:scaleX(0.9);width:15.6px;-webkit-text-stroke:0.35px;">65</span><span style="left:16.2px;top:54.2px;width:14.4px;height:13px;line-height:13px;color:#b6a486;-webkit-text-stroke:0.45px;font-size:9.9px;transform:scaleX(0.9);width:15.6px;-webkit-text-stroke:0.35px;">66</span><span style="left:31.2px;top:54.2px;width:14.4px;height:13px;line-height:13px;color:#b6a486;-webkit-text-stroke:0.45px;font-size:9.9px;transform:scaleX(0.9);width:15.6px;-webkit-text-stroke:0.35px;">67</span><span style="left:46.2px;top:54.2px;width:14.4px;height:13px;line-height:13px;color:#b6a486;-webkit-text-stroke:0.45px;font-size:9.9px;transform:scaleX(0.9);width:15.6px;-webkit-text-stroke:0.35px;">68</span><span style="left:61.2px;top:54.2px;width:14.4px;height:13px;line-height:13px;color:#b6a486;-webkit-text-stroke:0.45px;font-size:9.9px;transform:scaleX(0.9);width:15.6px;-webkit-text-stroke:0.35px;">69</span><span style="left:76.2px;top:54.2px;width:14.4px;height:13px;line-height:13px;color:#b6a486;-webkit-text-stroke:0.45px;font-size:9.9px;transform:scaleX(0.9);width:15.6px;-webkit-text-stroke:0.35px;">70</span><span style="left:91.2px;top:54.2px;width:14.4px;height:13px;line-height:13px;color:#b6a486;-webkit-text-stroke:0.45px;font-size:9.9px;transform:scaleX(0.9);width:15.6px;-webkit-text-stroke:0.35px;">71</span><span style="left:106.2px;top:54.2px;width:14.4px;height:13px;line-height:13px;color:#b6a486;-webkit-text-stroke:0.45px;font-size:9.9px;transform:scaleX(0.9);width:15.6px;-webkit-text-stroke:0.35px;">72</span><span style="left:121.2px;top:54.2px;width:14.4px;height:13px;line-height:13px;color:#b6a486;-webkit-text-stroke:0.45px;font-size:9.9px;transform:scaleX(0.9);width:15.6px;-webkit-text-stroke:0.35px;">73</span><span style="left:136.2px;top:54.2px;width:14.4px;height:13px;line-height:13px;color:#b6a486;-webkit-text-stroke:0.45px;font-size:9.9px;transform:scaleX(0.9);width:15.6px;-webkit-text-stroke:0.35px;">74</span><span style="left:151.2px;top:54.2px;width:14.4px;height:13px;line-height:13px;color:#b6a486;-webkit-text-stroke:0.45px;font-size:9.9px;transform:scaleX(0.9);width:15.6px;-webkit-text-stroke:0.35px;">75</span><span style="left:166.2px;top:54.2px;width:14.4px;height:13px;line-height:13px;color:#b6a486;-webkit-text-stroke:0.45px;font-size:9.9px;transform:scaleX(0.9);width:15.6px;-webkit-text-stroke:0.35px;">76</span><span style="left:181.2px;top:54.2px;width:14.4px;height:13px;line-height:13px;color:#b6a486;-webkit-text-stroke:0.45px;font-size:9.9px;transform:scaleX(0.9);width:15.6px;-webkit-text-stroke:0.35px;">77</span><span style="left:196.2px;top:54.2px;width:14.4px;height:13px;line-height:13px;color:#b6a486;-webkit-text-stroke:0.45px;font-size:9.9px;transform:scaleX(0.9);width:15.6px;-webkit-text-stroke:0.35px;">78</span><span style="left:211.2px;top:54.2px;width:14.4px;height:13px;line-height:13px;color:#b6a486;-webkit-text-stroke:0.45px;font-size:9.9px;transform:scaleX(0.9);width:15.6px;-webkit-text-stroke:0.35px;">79</span><span style="left:226.2px;top:54.2px;width:14.4px;height:13px;line-height:13px;color:#b6a486;-webkit-text-stroke:0.45px;font-size:9.9px;transform:scaleX(0.9);width:15.6px;-webkit-text-stroke:0.35px;">80</span><span style="left:1.2px;top:68.2px;width:14.4px;height:13px;line-height:13px;color:#b6a486;-webkit-text-stroke:0.45px;font-size:9.9px;transform:scaleX(0.9);width:15.6px;-webkit-text-stroke:0.35px;">81</span><span style="left:16.2px;top:68.2px;width:14.4px;height:13px;line-height:13px;color:#b6a486;-webkit-text-stroke:0.45px;font-size:9.9px;transform:scaleX(0.9);width:15.6px;-webkit-text-stroke:0.35px;">82</span><span style="left:31.2px;top:68.2px;width:14.4px;height:13px;line-height:13px;color:#b6a486;-webkit-text-stroke:0.45px;font-size:9.9px;transform:scaleX(0.9);width:15.6px;-webkit-text-stroke:0.35px;">83</span><span style="left:46.2px;top:68.2px;width:14.4px;height:13px;line-height:13px;color:#b6a486;-webkit-text-stroke:0.45px;font-size:9.9px;transform:scaleX(0.9);width:15.6px;-webkit-text-stroke:0.35px;">84</span><span style="left:61.2px;top:68.2px;width:14.4px;height:13px;line-height:13px;color:#b6a486;-webkit-text-stroke:0.45px;font-size:9.9px;transform:scaleX(0.9);width:15.6px;-webkit-text-stroke:0.35px;">85</span><span style="left:76.2px;top:68.2px;width:14.4px;height:13px;line-height:13px;color:#b6a486;-webkit-text-stroke:0.45px;font-size:9.9px;transform:scaleX(0.9);width:15.6px;-webkit-text-stroke:0.35px;">86</span><span style="left:91.2px;top:68.2px;width:14.4px;height:13px;line-height:13px;color:#b6a486;-webkit-text-stroke:0.45px;font-size:9.9px;transform:scaleX(0.9);width:15.6px;-webkit-text-stroke:0.35px;">87</span><span style="left:106.2px;top:68.2px;width:14.4px;height:13px;line-height:13px;color:#b6a486;-webkit-text-stroke:0.45px;font-size:9.9px;transform:scaleX(0.9);width:15.6px;-webkit-text-stroke:0.35px;">88</span><span style="left:121.2px;top:68.2px;width:14.4px;height:13px;line-height:13px;color:#b6a486;-webkit-text-stroke:0.45px;font-size:9.9px;transform:scaleX(0.9);width:15.6px;-webkit-text-stroke:0.35px;">89</span><span style="left:136.2px;top:68.2px;width:14.4px;height:13px;line-height:13px;color:#b6a486;-webkit-text-stroke:0.45px;font-size:9.9px;transform:scaleX(0.9);width:15.6px;-webkit-text-stroke:0.35px;">90</span><span style="left:151.2px;top:68.2px;width:14.4px;height:13px;line-height:13px;color:#b6a486;-webkit-text-stroke:0.45px;font-size:9.9px;transform:scaleX(0.9);width:15.6px;-webkit-text-stroke:0.35px;">91</span><span style="left:166.2px;top:68.2px;width:14.4px;height:13px;line-height:13px;color:#b6a486;-webkit-text-stroke:0.45px;font-size:9.9px;transform:scaleX(0.9);width:15.6px;-webkit-text-stroke:0.35px;">92</span><span style="left:181.2px;top:68.2px;width:14.4px;height:13px;line-height:13px;color:#b6a486;-webkit-text-stroke:0.45px;font-size:9.9px;transform:scaleX(0.9);width:15.6px;-webkit-text-stroke:0.35px;">93</span><span style="left:196.2px;top:68.2px;width:14.4px;height:13px;line-height:13px;color:#b6a486;-webkit-text-stroke:0.45px;font-size:9.9px;transform:scaleX(0.9);width:15.6px;-webkit-text-stroke:0.35px;">94</span><span style="left:211.2px;top:68.2px;width:14.4px;height:13px;line-height:13px;color:#b6a486;-webkit-text-stroke:0.45px;font-size:9.9px;transform:scaleX(0.9);width:15.6px;-webkit-text-stroke:0.35px;">95</span><span style="left:226.2px;top:68.2px;width:14.4px;height:13px;line-height:13px;color:#b6a486;-webkit-text-stroke:0.45px;font-size:9.9px;transform:scaleX(0.9);width:15.6px;-webkit-text-stroke:0.35px;">96</span><span style="left:1.2px;top:82.2px;width:14.4px;height:13px;line-height:13px;color:#b6a486;-webkit-text-stroke:0.45px;font-size:9.9px;transform:scaleX(0.9);width:15.6px;-webkit-text-stroke:0.35px;">97</span><span style="left:16.2px;top:82.2px;width:14.4px;height:13px;line-height:13px;color:#b6a486;-webkit-text-stroke:0.45px;font-size:9.9px;transform:scaleX(0.9);width:15.6px;-webkit-text-stroke:0.35px;">98</span><span style="left:31.2px;top:82.2px;width:14.4px;height:13px;line-height:13px;color:#b6a486;-webkit-text-stroke:0.45px;font-size:9.9px;transform:scaleX(0.9);width:15.6px;-webkit-text-stroke:0.35px;">99</span><span style="left:46.2px;top:82.2px;width:14.4px;height:13px;line-height:13px;color:#b6a486;-webkit-text-stroke:0.45px;font-size:9.9px;transform:scaleX(0.9);width:15.6px;-webkit-text-stroke:0.35px;">100</span><span style="left:61.2px;top:82.2px;width:14.4px;height:13px;line-height:13px;color:#b6a486;-webkit-text-stroke:0.45px;font-size:9.9px;transform:scaleX(0.9);width:15.6px;-webkit-text-stroke:0.35px;">101</span><span style="left:76.2px;top:82.2px;width:14.4px;height:13px;line-height:13px;color:#b6a486;-webkit-text-stroke:0.45px;font-size:9.9px;transform:scaleX(0.9);width:15.6px;-webkit-text-stroke:0.35px;">102</span><span style="left:91.2px;top:82.2px;width:14.4px;height:13px;line-height:13px;color:#b6a486;-webkit-text-stroke:0.45px;font-size:9.9px;transform:scaleX(0.9);width:15.6px;-webkit-text-stroke:0.35px;">103</span><span style="left:106.2px;top:82.2px;width:14.4px;height:13px;line-height:13px;color:#b6a486;-webkit-text-stroke:0.45px;font-size:9.9px;transform:scaleX(0.9);width:15.6px;-webkit-text-stroke:0.35px;">104</span><span style="left:121.2px;top:82.2px;width:14.4px;height:13px;line-height:13px;color:#b6a486;-webkit-text-stroke:0.45px;font-size:9.9px;transform:scaleX(0.9);width:15.6px;-webkit-text-stroke:0.35px;">105</span><span style="left:136.2px;top:82.2px;width:14.4px;height:13px;line-height:13px;color:#b6a486;-webkit-text-stroke:0.45px;font-size:9.9px;transform:scaleX(0.9);width:15.6px;-webkit-text-stroke:0.35px;">106</span><span style="left:151.2px;top:82.2px;width:14.4px;height:13px;line-height:13px;color:#b6a486;-webkit-text-stroke:0.45px;font-size:9.9px;transform:scaleX(0.9);width:15.6px;-webkit-text-stroke:0.35px;">107</span><span style="left:166.2px;top:82.2px;width:14.4px;height:13px;line-height:13px;color:#b6a486;-webkit-text-stroke:0.45px;font-size:9.9px;transform:scaleX(0.9);width:15.6px;-webkit-text-stroke:0.35px;">108</span><span style="left:181.2px;top:82.2px;width:14.4px;height:13px;line-height:13px;color:#b6a486;-webkit-text-stroke:0.45px;font-size:9.9px;transform:scaleX(0.9);width:15.6px;-webkit-text-stroke:0.35px;">109</span><span style="left:196.2px;top:82.2px;width:14.4px;height:13px;line-height:13px;color:#b6a486;-webkit-text-stroke:0.45px;font-size:9.9px;transform:scaleX(0.9);width:15.6px;-webkit-text-stroke:0.35px;">110</span><span style="left:211.2px;top:82.2px;width:14.4px;height:13px;line-height:13px;color:#b6a486;-webkit-text-stroke:0.45px;font-size:9.9px;transform:scaleX(0.9);width:15.6px;-webkit-text-stroke:0.35px;">111</span><span style="left:226.2px;top:82.2px;width:14.4px;height:13px;line-height:13px;color:#b6a486;-webkit-text-stroke:0.45px;font-size:9.9px;transform:scaleX(0.9);width:15.6px;-webkit-text-stroke:0.35px;">112</span><span style="left:1.2px;top:96.2px;width:14.4px;height:13px;line-height:13px;color:#b6a486;-webkit-text-stroke:0.45px;font-size:9.9px;transform:scaleX(0.9);width:15.6px;-webkit-text-stroke:0.35px;">113</span><span style="left:16.2px;top:96.2px;width:14.4px;height:13px;line-height:13px;color:#b6a486;-webkit-text-stroke:0.45px;font-size:9.9px;transform:scaleX(0.9);width:15.6px;-webkit-text-stroke:0.35px;">114</span><span style="left:31.2px;top:96.2px;width:14.4px;height:13px;line-height:13px;color:#b6a486;-webkit-text-stroke:0.45px;font-size:9.9px;transform:scaleX(0.9);width:15.6px;-webkit-text-stroke:0.35px;">115</span><span style="left:46.2px;top:96.2px;width:14.4px;height:13px;line-height:13px;color:#b6a486;-webkit-text-stroke:0.45px;font-size:9.9px;transform:scaleX(0.9);width:15.6px;-webkit-text-stroke:0.35px;">116</span><span style="left:61.2px;top:96.2px;width:14.4px;height:13px;line-height:13px;color:#b6a486;-webkit-text-stroke:0.45px;font-size:9.9px;transform:scaleX(0.9);width:15.6px;-webkit-text-stroke:0.35px;">117</span><span style="left:76.2px;top:96.2px;width:14.4px;height:13px;line-height:13px;color:#b6a486;-webkit-text-stroke:0.45px;font-size:9.9px;transform:scaleX(0.9);width:15.6px;-webkit-text-stroke:0.35px;">118</span><span style="left:91.2px;top:96.2px;width:14.4px;height:13px;line-height:13px;color:#b6a486;-webkit-text-stroke:0.45px;font-size:9.9px;transform:scaleX(0.9);width:15.6px;-webkit-text-stroke:0.35px;">119</span><span style="left:106.2px;top:96.2px;width:14.4px;height:13px;line-height:13px;color:#b6a486;-webkit-text-stroke:0.45px;font-size:9.9px;transform:scaleX(0.9);width:15.6px;-webkit-text-stroke:0.35px;">120</span><span style="left:121.2px;top:96.2px;width:14.4px;height:13px;line-height:13px;color:#b6a486;-webkit-text-stroke:0.45px;font-size:9.9px;transform:scaleX(0.9);width:15.6px;-webkit-text-stroke:0.35px;">121</span><span style="left:136.2px;top:96.2px;width:14.4px;height:13px;line-height:13px;color:#b6a486;-webkit-text-stroke:0.45px;font-size:9.9px;transform:scaleX(0.9);width:15.6px;-webkit-text-stroke:0.35px;">122</span><span style="left:151.2px;top:96.2px;width:14.4px;height:13px;line-height:13px;color:#b6a486;-webkit-text-stroke:0.45px;font-size:9.9px;transform:scaleX(0.9);width:15.6px;-webkit-text-stroke:0.35px;">123</span><span style="left:166.2px;top:96.2px;width:14.4px;height:13px;line-height:13px;color:#b6a486;-webkit-text-stroke:0.45px;font-size:9.9px;transform:scaleX(0.9);width:15.6px;-webkit-text-stroke:0.35px;">124</span><span style="left:181.2px;top:96.2px;width:14.4px;height:13px;line-height:13px;color:#b6a486;-webkit-text-stroke:0.45px;font-size:9.9px;transform:scaleX(0.9);width:15.6px;-webkit-text-stroke:0.35px;">125</span><span style="left:196.2px;top:96.2px;width:14.4px;height:13px;line-height:13px;color:#b6a486;-webkit-text-stroke:0.45px;font-size:9.9px;transform:scaleX(0.9);width:15.6px;-webkit-text-stroke:0.35px;">126</span><span style="left:211.2px;top:96.2px;width:14.4px;height:13px;line-height:13px;color:#b6a486;-webkit-text-stroke:0.45px;font-size:9.9px;transform:scaleX(0.9);width:15.6px;-webkit-text-stroke:0.35px;">127</span><span style="left:226.2px;top:96.2px;width:14.4px;height:13px;line-height:13px;color:#b6a486;-webkit-text-stroke:0.45px;font-size:9.9px;transform:scaleX(0.9);width:15.6px;-webkit-text-stroke:0.35px;">128</span></div></div></div>
<span class="t " style="transform:scaleX(0.8753);left:422.7px;top:450.84px;font-size:12px;line-height:14px;color:#000;">Linie sperrt GONG:</span>
<div style="left:520px;top:449px;width:39.5px;height:21px;background:#fff;box-sizing:border-box;border-top:1px solid #a0a0a0;border-left:1px solid #a0a0a0;border-right:1px solid #fff;border-bottom:1px solid #fff;"><div style="left:0;top:0;width:37.5px;height:19px;box-sizing:border-box;border-top:1px solid #696969;border-left:1px solid #696969;border-right:1px solid #e3e3e3;border-bottom:1px solid #e3e3e3;"></div><div style="left:21.5px;top:1px;width:14px;height:8px;box-sizing:border-box;background:#f0f0f0;border-top:1px solid #fff;border-left:1px solid #fff;border-right:1px solid #696969;border-bottom:1px solid #696969"><svg style="left:2.5px;top:1.0px" width="7" height="4" viewBox="0 0 7 4"><polygon points="3.5,0 7,4 0,4" fill="#000"/></svg></div><div style="left:21.5px;top:9px;width:14px;height:8px;box-sizing:border-box;background:#f0f0f0;border-top:1px solid #fff;border-left:1px solid #fff;border-right:1px solid #696969;border-bottom:1px solid #696969"><svg style="left:2.5px;top:1.0px" width="7" height="4" viewBox="0 0 7 4"><polygon points="0,0 7,0 3.5,4" fill="#000"/></svg></div></div>
<span class="t " style="left:523.2px;top:451.84px;font-size:12px;line-height:14px;color:#000;">0</span>
<span class="t " style="transform:scaleX(0.8548);left:569.2px;top:450.84px;font-size:12px;line-height:14px;color:#000;">Sperrzeit:</span>
<div style="left:628px;top:449px;width:40px;height:21px;background:#fff;box-sizing:border-box;border-top:1px solid #a0a0a0;border-left:1px solid #a0a0a0;border-right:1px solid #fff;border-bottom:1px solid #fff;"><div style="left:0;top:0;width:38px;height:19px;box-sizing:border-box;border-top:1px solid #696969;border-left:1px solid #696969;border-right:1px solid #e3e3e3;border-bottom:1px solid #e3e3e3;"></div><div style="left:22px;top:1px;width:14px;height:8px;box-sizing:border-box;background:#f0f0f0;border-top:1px solid #fff;border-left:1px solid #fff;border-right:1px solid #696969;border-bottom:1px solid #696969"><svg style="left:2.5px;top:1.0px" width="7" height="4" viewBox="0 0 7 4"><polygon points="3.5,0 7,4 0,4" fill="#000"/></svg></div><div style="left:22px;top:9px;width:14px;height:8px;box-sizing:border-box;background:#f0f0f0;border-top:1px solid #fff;border-left:1px solid #fff;border-right:1px solid #696969;border-bottom:1px solid #696969"><svg style="left:2.5px;top:1.0px" width="7" height="4" viewBox="0 0 7 4"><polygon points="0,0 7,0 3.5,4" fill="#000"/></svg></div></div>
<span class="t " style="left:631.2px;top:451.84px;font-size:12px;line-height:14px;color:#000;">0</span>
<span class="t " style="transform:scaleX(0.8915);left:421.2px;top:472.84px;font-size:12px;line-height:14px;color:#000;">Schnell Scharf in Bereichen:</span>
<div style="left:421px;top:487px;width:244px;height:32px;background:#fff;box-sizing:border-box;border-top:1px solid #a0a0a0;border-left:1px solid #a0a0a0;border-right:1px solid #fff;border-bottom:1px solid #fff;"><div style="left:0;top:0;width:242px;height:30px;box-sizing:border-box;border-top:1px solid #696969;border-left:1px solid #696969;border-right:1px solid #e3e3e3;border-bottom:1px solid #e3e3e3;"></div><div class="g" style="left:1px;top:1px;width:240px;height:28px;background:repeating-linear-gradient(to right,transparent 0 14px,#bdbdbd 14px 15px),repeating-linear-gradient(to bottom,transparent 0 13px,#bdbdbd 13px 14px),#fff;"><div style="left:0;top:0;width:89px;height:13px;background:#ffa014"></div><div style="left:14px;top:0;width:1px;height:13px;background:#ebbd80"></div><div style="left:29px;top:0;width:1px;height:13px;background:#ebbd80"></div><div style="left:44px;top:0;width:1px;height:13px;background:#ebbd80"></div><div style="left:59px;top:0;width:1px;height:13px;background:#ebbd80"></div><div style="left:74px;top:0;width:1px;height:13px;background:#ebbd80"></div><div class="gw" style="left:0;top:0;width:240px;height:28px"><span style="left:1.2px;top:1px;width:14.4px;height:13px;line-height:13px;color:#000;">1</span><span style="left:16.2px;top:1px;width:14.4px;height:13px;line-height:13px;color:#000;">2</span><span style="left:31.2px;top:1px;width:14.4px;height:13px;line-height:13px;color:#000;">3</span><span style="left:46.2px;top:1px;width:14.4px;height:13px;line-height:13px;color:#000;">4</span><span style="left:61.2px;top:1px;width:14.4px;height:13px;line-height:13px;color:#000;">5</span><span style="left:76.2px;top:1px;width:14.4px;height:13px;line-height:13px;color:#000;">6</span><span style="left:91.2px;top:1px;width:14.4px;height:13px;line-height:13px;color:#8e8e8e;">7</span><span style="left:106.2px;top:1px;width:14.4px;height:13px;line-height:13px;color:#8e8e8e;">8</span><span style="left:121.2px;top:1px;width:14.4px;height:13px;line-height:13px;color:#8e8e8e;">9</span><span style="left:136.2px;top:1px;width:14.4px;height:13px;line-height:13px;color:#8e8e8e;">10</span><span style="left:151.2px;top:1px;width:14.4px;height:13px;line-height:13px;color:#8e8e8e;">11</span><span style="left:166.2px;top:1px;width:14.4px;height:13px;line-height:13px;color:#8e8e8e;">12</span><span style="left:181.2px;top:1px;width:14.4px;height:13px;line-height:13px;color:#8e8e8e;">13</span><span style="left:196.2px;top:1px;width:14.4px;height:13px;line-height:13px;color:#8e8e8e;">14</span><span style="left:211.2px;top:1px;width:14.4px;height:13px;line-height:13px;color:#8e8e8e;">15</span><span style="left:226.2px;top:1px;width:14.4px;height:13px;line-height:13px;color:#8e8e8e;">16</span><span style="left:1.2px;top:15px;width:14.4px;height:13px;line-height:13px;color:#8e8e8e;">17</span><span style="left:16.2px;top:15px;width:14.4px;height:13px;line-height:13px;color:#8e8e8e;">18</span><span style="left:31.2px;top:15px;width:14.4px;height:13px;line-height:13px;color:#8e8e8e;">19</span><span style="left:46.2px;top:15px;width:14.4px;height:13px;line-height:13px;color:#8e8e8e;">20</span><span style="left:61.2px;top:15px;width:14.4px;height:13px;line-height:13px;color:#8e8e8e;">21</span><span style="left:76.2px;top:15px;width:14.4px;height:13px;line-height:13px;color:#8e8e8e;">22</span><span style="left:91.2px;top:15px;width:14.4px;height:13px;line-height:13px;color:#8e8e8e;">23</span><span style="left:106.2px;top:15px;width:14.4px;height:13px;line-height:13px;color:#8e8e8e;">24</span><span style="left:121.2px;top:15px;width:14.4px;height:13px;line-height:13px;color:#8e8e8e;">25</span><span style="left:136.2px;top:15px;width:14.4px;height:13px;line-height:13px;color:#8e8e8e;">26</span><span style="left:151.2px;top:15px;width:14.4px;height:13px;line-height:13px;color:#8e8e8e;">27</span><span style="left:166.2px;top:15px;width:14.4px;height:13px;line-height:13px;color:#8e8e8e;">28</span><span style="left:181.2px;top:15px;width:14.4px;height:13px;line-height:13px;color:#8e8e8e;">29</span><span style="left:196.2px;top:15px;width:14.4px;height:13px;line-height:13px;color:#8e8e8e;">30</span><span style="left:211.2px;top:15px;width:14.4px;height:13px;line-height:13px;color:#8e8e8e;">31</span><span style="left:226.2px;top:15px;width:14.4px;height:13px;line-height:13px;color:#8e8e8e;">32</span></div></div></div>
<span class="t " style="transform:scaleX(0.8845);left:423.2px;top:519.84px;font-size:12px;line-height:14px;color:#000;">Eingangsverzögerung in Bereich anzeigen:</span>
<div style="left:421px;top:533px;width:244px;height:32px;background:#ffa014;box-sizing:border-box;border-top:1px solid #a0a0a0;border-left:1px solid #a0a0a0;border-right:1px solid #fff;border-bottom:1px solid #fff;"><div style="left:0;top:0;width:242px;height:30px;box-sizing:border-box;border-top:1px solid #696969;border-left:1px solid #696969;border-right:1px solid #e3e3e3;border-bottom:1px solid #e3e3e3;"></div><div class="g" style="left:1px;top:1px;width:240px;height:28px;background:repeating-linear-gradient(to right,transparent 0 14px,#ebbd80 14px 15px),repeating-linear-gradient(to bottom,transparent 0 13px,#ebbd80 13px 14px),#ffa014;"><div class="gw" style="left:0;top:0;width:240px;height:28px"><span style="left:1.2px;top:1px;width:14.4px;height:13px;line-height:13px;color:#000;">1</span><span style="left:16.2px;top:1px;width:14.4px;height:13px;line-height:13px;color:#000;">2</span><span style="left:31.2px;top:1px;width:14.4px;height:13px;line-height:13px;color:#000;">3</span><span style="left:46.2px;top:1px;width:14.4px;height:13px;line-height:13px;color:#000;">4</span><span style="left:61.2px;top:1px;width:14.4px;height:13px;line-height:13px;color:#000;">5</span><span style="left:76.2px;top:1px;width:14.4px;height:13px;line-height:13px;color:#000;">6</span><span style="left:91.2px;top:1px;width:14.4px;height:13px;line-height:13px;color:#b6a486;-webkit-text-stroke:0.45px;">7</span><span style="left:106.2px;top:1px;width:14.4px;height:13px;line-height:13px;color:#b6a486;-webkit-text-stroke:0.45px;">8</span><span style="left:121.2px;top:1px;width:14.4px;height:13px;line-height:13px;color:#b6a486;-webkit-text-stroke:0.45px;">9</span><span style="left:136.2px;top:1px;width:14.4px;height:13px;line-height:13px;color:#b6a486;-webkit-text-stroke:0.45px;">10</span><span style="left:151.2px;top:1px;width:14.4px;height:13px;line-height:13px;color:#b6a486;-webkit-text-stroke:0.45px;">11</span><span style="left:166.2px;top:1px;width:14.4px;height:13px;line-height:13px;color:#b6a486;-webkit-text-stroke:0.45px;">12</span><span style="left:181.2px;top:1px;width:14.4px;height:13px;line-height:13px;color:#b6a486;-webkit-text-stroke:0.45px;">13</span><span style="left:196.2px;top:1px;width:14.4px;height:13px;line-height:13px;color:#b6a486;-webkit-text-stroke:0.45px;">14</span><span style="left:211.2px;top:1px;width:14.4px;height:13px;line-height:13px;color:#b6a486;-webkit-text-stroke:0.45px;">15</span><span style="left:226.2px;top:1px;width:14.4px;height:13px;line-height:13px;color:#b6a486;-webkit-text-stroke:0.45px;">16</span><span style="left:1.2px;top:15px;width:14.4px;height:13px;line-height:13px;color:#b6a486;-webkit-text-stroke:0.45px;">17</span><span style="left:16.2px;top:15px;width:14.4px;height:13px;line-height:13px;color:#b6a486;-webkit-text-stroke:0.45px;">18</span><span style="left:31.2px;top:15px;width:14.4px;height:13px;line-height:13px;color:#b6a486;-webkit-text-stroke:0.45px;">19</span><span style="left:46.2px;top:15px;width:14.4px;height:13px;line-height:13px;color:#b6a486;-webkit-text-stroke:0.45px;">20</span><span style="left:61.2px;top:15px;width:14.4px;height:13px;line-height:13px;color:#b6a486;-webkit-text-stroke:0.45px;">21</span><span style="left:76.2px;top:15px;width:14.4px;height:13px;line-height:13px;color:#b6a486;-webkit-text-stroke:0.45px;">22</span><span style="left:91.2px;top:15px;width:14.4px;height:13px;line-height:13px;color:#b6a486;-webkit-text-stroke:0.45px;">23</span><span style="left:106.2px;top:15px;width:14.4px;height:13px;line-height:13px;color:#b6a486;-webkit-text-stroke:0.45px;">24</span><span style="left:121.2px;top:15px;width:14.4px;height:13px;line-height:13px;color:#b6a486;-webkit-text-stroke:0.45px;">25</span><span style="left:136.2px;top:15px;width:14.4px;height:13px;line-height:13px;color:#b6a486;-webkit-text-stroke:0.45px;">26</span><span style="left:151.2px;top:15px;width:14.4px;height:13px;line-height:13px;color:#b6a486;-webkit-text-stroke:0.45px;">27</span><span style="left:166.2px;top:15px;width:14.4px;height:13px;line-height:13px;color:#b6a486;-webkit-text-stroke:0.45px;">28</span><span style="left:181.2px;top:15px;width:14.4px;height:13px;line-height:13px;color:#b6a486;-webkit-text-stroke:0.45px;">29</span><span style="left:196.2px;top:15px;width:14.4px;height:13px;line-height:13px;color:#b6a486;-webkit-text-stroke:0.45px;">30</span><span style="left:211.2px;top:15px;width:14.4px;height:13px;line-height:13px;color:#b6a486;-webkit-text-stroke:0.45px;">31</span><span style="left:226.2px;top:15px;width:14.4px;height:13px;line-height:13px;color:#b6a486;-webkit-text-stroke:0.45px;">32</span></div></div></div>
<span class="t " style="transform:scaleX(0.8934);left:422px;top:565.84px;font-size:12px;line-height:14px;color:#000;">Ausgangsverzögerung in Bereich anzeigen:</span>
<div style="left:421px;top:579px;width:244px;height:32px;background:#ffa014;box-sizing:border-box;border-top:1px solid #a0a0a0;border-left:1px solid #a0a0a0;border-right:1px solid #fff;border-bottom:1px solid #fff;"><div style="left:0;top:0;width:242px;height:30px;box-sizing:border-box;border-top:1px solid #696969;border-left:1px solid #696969;border-right:1px solid #e3e3e3;border-bottom:1px solid #e3e3e3;"></div><div class="g" style="left:1px;top:1px;width:240px;height:28px;background:repeating-linear-gradient(to right,transparent 0 14px,#ebbd80 14px 15px),repeating-linear-gradient(to bottom,transparent 0 13px,#ebbd80 13px 14px),#ffa014;"><div class="gw" style="left:0;top:0;width:240px;height:28px"><span style="left:1.2px;top:1px;width:14.4px;height:13px;line-height:13px;color:#000;">1</span><span style="left:16.2px;top:1px;width:14.4px;height:13px;line-height:13px;color:#000;">2</span><span style="left:31.2px;top:1px;width:14.4px;height:13px;line-height:13px;color:#000;">3</span><span style="left:46.2px;top:1px;width:14.4px;height:13px;line-height:13px;color:#000;">4</span><span style="left:61.2px;top:1px;width:14.4px;height:13px;line-height:13px;color:#000;">5</span><span style="left:76.2px;top:1px;width:14.4px;height:13px;line-height:13px;color:#000;">6</span><span style="left:91.2px;top:1px;width:14.4px;height:13px;line-height:13px;color:#b6a486;-webkit-text-stroke:0.45px;">7</span><span style="left:106.2px;top:1px;width:14.4px;height:13px;line-height:13px;color:#b6a486;-webkit-text-stroke:0.45px;">8</span><span style="left:121.2px;top:1px;width:14.4px;height:13px;line-height:13px;color:#b6a486;-webkit-text-stroke:0.45px;">9</span><span style="left:136.2px;top:1px;width:14.4px;height:13px;line-height:13px;color:#b6a486;-webkit-text-stroke:0.45px;">10</span><span style="left:151.2px;top:1px;width:14.4px;height:13px;line-height:13px;color:#b6a486;-webkit-text-stroke:0.45px;">11</span><span style="left:166.2px;top:1px;width:14.4px;height:13px;line-height:13px;color:#b6a486;-webkit-text-stroke:0.45px;">12</span><span style="left:181.2px;top:1px;width:14.4px;height:13px;line-height:13px;color:#b6a486;-webkit-text-stroke:0.45px;">13</span><span style="left:196.2px;top:1px;width:14.4px;height:13px;line-height:13px;color:#b6a486;-webkit-text-stroke:0.45px;">14</span><span style="left:211.2px;top:1px;width:14.4px;height:13px;line-height:13px;color:#b6a486;-webkit-text-stroke:0.45px;">15</span><span style="left:226.2px;top:1px;width:14.4px;height:13px;line-height:13px;color:#b6a486;-webkit-text-stroke:0.45px;">16</span><span style="left:1.2px;top:15px;width:14.4px;height:13px;line-height:13px;color:#b6a486;-webkit-text-stroke:0.45px;">17</span><span style="left:16.2px;top:15px;width:14.4px;height:13px;line-height:13px;color:#b6a486;-webkit-text-stroke:0.45px;">18</span><span style="left:31.2px;top:15px;width:14.4px;height:13px;line-height:13px;color:#b6a486;-webkit-text-stroke:0.45px;">19</span><span style="left:46.2px;top:15px;width:14.4px;height:13px;line-height:13px;color:#b6a486;-webkit-text-stroke:0.45px;">20</span><span style="left:61.2px;top:15px;width:14.4px;height:13px;line-height:13px;color:#b6a486;-webkit-text-stroke:0.45px;">21</span><span style="left:76.2px;top:15px;width:14.4px;height:13px;line-height:13px;color:#b6a486;-webkit-text-stroke:0.45px;">22</span><span style="left:91.2px;top:15px;width:14.4px;height:13px;line-height:13px;color:#b6a486;-webkit-text-stroke:0.45px;">23</span><span style="left:106.2px;top:15px;width:14.4px;height:13px;line-height:13px;color:#b6a486;-webkit-text-stroke:0.45px;">24</span><span style="left:121.2px;top:15px;width:14.4px;height:13px;line-height:13px;color:#b6a486;-webkit-text-stroke:0.45px;">25</span><span style="left:136.2px;top:15px;width:14.4px;height:13px;line-height:13px;color:#b6a486;-webkit-text-stroke:0.45px;">26</span><span style="left:151.2px;top:15px;width:14.4px;height:13px;line-height:13px;color:#b6a486;-webkit-text-stroke:0.45px;">27</span><span style="left:166.2px;top:15px;width:14.4px;height:13px;line-height:13px;color:#b6a486;-webkit-text-stroke:0.45px;">28</span><span style="left:181.2px;top:15px;width:14.4px;height:13px;line-height:13px;color:#b6a486;-webkit-text-stroke:0.45px;">29</span><span style="left:196.2px;top:15px;width:14.4px;height:13px;line-height:13px;color:#b6a486;-webkit-text-stroke:0.45px;">30</span><span style="left:211.2px;top:15px;width:14.4px;height:13px;line-height:13px;color:#b6a486;-webkit-text-stroke:0.45px;">31</span><span style="left:226.2px;top:15px;width:14.4px;height:13px;line-height:13px;color:#b6a486;-webkit-text-stroke:0.45px;">32</span></div></div></div>
<div style="left:676px;top:123px;width:233px;height:85px;border:1px solid #a0a0a0;box-sizing:border-box"></div>
<div style="left:677px;top:124px;width:233px;height:85px;border:1px solid #fff;box-sizing:border-box"></div>
<div style="left:676px;top:123px;width:233px;height:85px;border:1px solid #a0a0a0;box-sizing:border-box"></div>
<span class="t " style="transform:scaleX(0.8678);left:682.2px;top:130.84px;font-size:12px;line-height:14px;color:#000;">Uhrzeitformat:</span>
<div style="left:776px;top:128px;width:125px;height:20px;background:#f0f0f0;box-sizing:border-box;border-top:1px solid #a0a0a0;border-left:1px solid #a0a0a0;border-right:1px solid #fff;border-bottom:1px solid #fff;"><div style="left:0;top:0;width:123px;height:18px;box-sizing:border-box;border-top:1px solid #696969;border-left:1px solid #696969;border-right:1px solid #e3e3e3;border-bottom:1px solid #e3e3e3;"></div><div style="left:106px;top:1px;width:17px;height:17px;box-sizing:border-box;background:#f0f0f0;border-top:1px solid #fff;border-left:1px solid #fff;border-right:1px solid #696969;border-bottom:1px solid #696969"><div style="left:0;top:0;width:14px;height:14px;border-right:1px solid #a0a0a0;border-bottom:1px solid #a0a0a0"></div><svg style="left:4.0px;top:5.0px" width="7" height="4" viewBox="0 0 7 4"><polygon points="0,0 7,0 3.5,4" fill="#a0a0a0"/></svg></div></div>
<span class="t " style="transform:scaleX(0.9457);left:780.2px;top:130.84px;font-size:12px;line-height:14px;color:#a0a0a0;">1. Jan, 12:00:00</span>
<span class="t " style="transform:scaleX(0.8921);left:682.2px;top:158.84px;font-size:12px;line-height:14px;color:#000;">LCD Beleuchtung:</span>
<div style="left:804px;top:154px;width:98px;height:20px;background:#f0f0f0;box-sizing:border-box;border-top:1px solid #a0a0a0;border-left:1px solid #a0a0a0;border-right:1px solid #fff;border-bottom:1px solid #fff;"><div style="left:0;top:0;width:96px;height:18px;box-sizing:border-box;border-top:1px solid #696969;border-left:1px solid #696969;border-right:1px solid #e3e3e3;border-bottom:1px solid #e3e3e3;"></div><div style="left:79px;top:1px;width:17px;height:17px;box-sizing:border-box;background:#f0f0f0;border-top:1px solid #fff;border-left:1px solid #fff;border-right:1px solid #696969;border-bottom:1px solid #696969"><div style="left:0;top:0;width:14px;height:14px;border-right:1px solid #a0a0a0;border-bottom:1px solid #a0a0a0"></div><svg style="left:4.0px;top:5.0px" width="7" height="4" viewBox="0 0 7 4"><polygon points="0,0 7,0 3.5,4" fill="#a0a0a0"/></svg></div></div>
<span class="t " style="transform:scaleX(0.9463);left:809px;top:156.84px;font-size:12px;line-height:14px;color:#a0a0a0;">Auto 0-1/2</span>
<span class="t " style="transform:scaleX(0.9117);left:683px;top:182.84px;font-size:12px;line-height:14px;color:#000;">Tastenbeleuchtung:</span>
<div style="left:804px;top:180px;width:98px;height:20px;background:#f0f0f0;box-sizing:border-box;border-top:1px solid #a0a0a0;border-left:1px solid #a0a0a0;border-right:1px solid #fff;border-bottom:1px solid #fff;"><div style="left:0;top:0;width:96px;height:18px;box-sizing:border-box;border-top:1px solid #696969;border-left:1px solid #696969;border-right:1px solid #e3e3e3;border-bottom:1px solid #e3e3e3;"></div><div style="left:79px;top:1px;width:17px;height:17px;box-sizing:border-box;background:#f0f0f0;border-top:1px solid #fff;border-left:1px solid #fff;border-right:1px solid #696969;border-bottom:1px solid #696969"><div style="left:0;top:0;width:14px;height:14px;border-right:1px solid #a0a0a0;border-bottom:1px solid #a0a0a0"></div><svg style="left:4.0px;top:5.0px" width="7" height="4" viewBox="0 0 7 4"><polygon points="0,0 7,0 3.5,4" fill="#a0a0a0"/></svg></div></div>
<span class="t " style="transform:scaleX(0.9433);left:808.5px;top:182.84px;font-size:12px;line-height:14px;color:#a0a0a0;">fehlt</span>
<div style="left:676px;top:214px;width:233px;height:25px;border:1px solid #a0a0a0;box-sizing:border-box"></div>
<div style="left:677px;top:215px;width:233px;height:25px;border:1px solid #fff;box-sizing:border-box"></div>
<div style="left:676px;top:214px;width:233px;height:25px;border:1px solid #a0a0a0;box-sizing:border-box"></div>
<div style="left:682px;top:214px;width:109.5px;height:2px;background:#f0f0f0"></div>
<span class="t " style="transform:scaleX(0.8855);left:684px;top:208.84px;font-size:12px;line-height:14px;color:#000;">Alarmmeldungen(Text)</span>
<div style="left:718px;top:222px;width:12.3px;height:12.3px;background:#fff;box-sizing:border-box;border-top:1px solid #a0a0a0;border-left:1px solid #a0a0a0;border-right:1px solid #fff;border-bottom:1px solid #fff;"><div style="left:0;top:0;width:10.3px;height:10.3px;box-sizing:border-box;border-top:1px solid #696969;border-left:1px solid #696969;border-right:1px solid #e3e3e3;border-bottom:1px solid #e3e3e3;"></div><svg style="left:1px;top:0.2px" width="9" height="9" viewBox="0 0 9 9"><path d="M1 3.3L3.4 5.7L7.9 1.2V4.2L3.4 8.7L1 6.3Z" fill="#000"/></svg></div>
<span class="t " style="transform:scaleX(0.9055);left:736.2px;top:221.84px;font-size:12px;line-height:14px;color:#000;">Bereiche</span>
<div style="left:806px;top:222px;width:12.3px;height:12.3px;background:#fff;box-sizing:border-box;border-top:1px solid #a0a0a0;border-left:1px solid #a0a0a0;border-right:1px solid #fff;border-bottom:1px solid #fff;"><div style="left:0;top:0;width:10.3px;height:10.3px;box-sizing:border-box;border-top:1px solid #696969;border-left:1px solid #696969;border-right:1px solid #e3e3e3;border-bottom:1px solid #e3e3e3;"></div><svg style="left:1px;top:0.2px" width="9" height="9" viewBox="0 0 9 9"><path d="M1 3.3L3.4 5.7L7.9 1.2V4.2L3.4 8.7L1 6.3Z" fill="#000"/></svg></div>
<span class="t " style="transform:scaleX(0.8960);left:823.9000000000001px;top:221.84px;font-size:12px;line-height:14px;color:#000;">Linien</span>
<div style="left:676px;top:245px;width:233px;height:36px;border:1px solid #a0a0a0;box-sizing:border-box"></div>
<div style="left:677px;top:246px;width:233px;height:36px;border:1px solid #fff;box-sizing:border-box"></div>
<div style="left:676px;top:245px;width:233px;height:36px;border:1px solid #a0a0a0;box-sizing:border-box"></div>
<div style="left:682px;top:245px;width:36px;height:2px;background:#f0f0f0"></div>
<span class="t " style="transform:scaleX(0.8786);left:684px;top:238.84px;font-size:12px;line-height:14px;color:#000;">Alarme</span>
<div style="left:720px;top:251px;width:12.3px;height:12.3px;background:#fff;box-sizing:border-box;border-top:1px solid #a0a0a0;border-left:1px solid #a0a0a0;border-right:1px solid #fff;border-bottom:1px solid #fff;"><div style="left:0;top:0;width:10.3px;height:10.3px;box-sizing:border-box;border-top:1px solid #696969;border-left:1px solid #696969;border-right:1px solid #e3e3e3;border-bottom:1px solid #e3e3e3;"></div><svg style="left:1px;top:0.2px" width="9" height="9" viewBox="0 0 9 9"><path d="M1 3.3L3.4 5.7L7.9 1.2V4.2L3.4 8.7L1 6.3Z" fill="#000"/></svg></div>
<span class="t " style="transform:scaleX(0.9085);left:737.9000000000001px;top:249.84px;font-size:12px;line-height:14px;color:#000;">Brand</span>
<div style="left:720px;top:266.2px;width:12.3px;height:12.3px;background:#fff;box-sizing:border-box;border-top:1px solid #a0a0a0;border-left:1px solid #a0a0a0;border-right:1px solid #fff;border-bottom:1px solid #fff;"><div style="left:0;top:0;width:10.3px;height:10.3px;box-sizing:border-box;border-top:1px solid #696969;border-left:1px solid #696969;border-right:1px solid #e3e3e3;border-bottom:1px solid #e3e3e3;"></div><svg style="left:1px;top:0.2px" width="9" height="9" viewBox="0 0 9 9"><path d="M1 3.3L3.4 5.7L7.9 1.2V4.2L3.4 8.7L1 6.3Z" fill="#000"/></svg></div>
<span class="t " style="transform:scaleX(0.9117);left:737.9000000000001px;top:264.84px;font-size:12px;line-height:14px;color:#000;">Notruf</span>
<div style="left:807px;top:250.2px;width:12.3px;height:12.3px;background:#fff;box-sizing:border-box;border-top:1px solid #a0a0a0;border-left:1px solid #a0a0a0;border-right:1px solid #fff;border-bottom:1px solid #fff;"><div style="left:0;top:0;width:10.3px;height:10.3px;box-sizing:border-box;border-top:1px solid #696969;border-left:1px solid #696969;border-right:1px solid #e3e3e3;border-bottom:1px solid #e3e3e3;"></div><svg style="left:1px;top:0.2px" width="9" height="9" viewBox="0 0 9 9"><path d="M1 3.3L3.4 5.7L7.9 1.2V4.2L3.4 8.7L1 6.3Z" fill="#000"/></svg></div>
<span class="t " style="transform:scaleX(0.8922);left:824.9000000000001px;top:248.84px;font-size:12px;line-height:14px;color:#000;">Überfall</span>
<div style="left:807px;top:265.2px;width:12.3px;height:12.3px;background:#fff;box-sizing:border-box;border-top:1px solid #a0a0a0;border-left:1px solid #a0a0a0;border-right:1px solid #fff;border-bottom:1px solid #fff;"><div style="left:0;top:0;width:10.3px;height:10.3px;box-sizing:border-box;border-top:1px solid #696969;border-left:1px solid #696969;border-right:1px solid #e3e3e3;border-bottom:1px solid #e3e3e3;"></div></div>
<span class="t " style="transform:scaleX(0.8983);left:824.9000000000001px;top:263.84px;font-size:12px;line-height:14px;color:#000;">3 f. Kennwörter</span>
<div style="left:676px;top:288px;width:233px;height:278px;border:1px solid #a0a0a0;box-sizing:border-box"></div>
<div style="left:677px;top:289px;width:233px;height:278px;border:1px solid #fff;box-sizing:border-box"></div>
<div style="left:676px;top:288px;width:233px;height:278px;border:1px solid #a0a0a0;box-sizing:border-box"></div>
<div style="left:682.8px;top:288px;width:80.4px;height:2px;background:#f0f0f0"></div>
<span class="t " style="transform:scaleX(0.8903);left:684.0px;top:282.84px;font-size:12px;line-height:14px;color:#000;">Übrige Optionen</span>
<div style="left:682px;top:297.3px;width:12.3px;height:12.3px;background:#fff;box-sizing:border-box;border-top:1px solid #a0a0a0;border-left:1px solid #a0a0a0;border-right:1px solid #fff;border-bottom:1px solid #fff;"><div style="left:0;top:0;width:10.3px;height:10.3px;box-sizing:border-box;border-top:1px solid #696969;border-left:1px solid #696969;border-right:1px solid #e3e3e3;border-bottom:1px solid #e3e3e3;"></div></div>
<span class="t " style="transform:scaleX(0.8541);left:700.0px;top:295.84px;font-size:12px;line-height:14px;color:#000;">Überfallalarm still</span>
<div style="left:682px;top:312.5px;width:12.3px;height:12.3px;background:#fff;box-sizing:border-box;border-top:1px solid #a0a0a0;border-left:1px solid #a0a0a0;border-right:1px solid #fff;border-bottom:1px solid #fff;"><div style="left:0;top:0;width:10.3px;height:10.3px;box-sizing:border-box;border-top:1px solid #696969;border-left:1px solid #696969;border-right:1px solid #e3e3e3;border-bottom:1px solid #e3e3e3;"></div><svg style="left:1px;top:0.2px" width="9" height="9" viewBox="0 0 9 9"><path d="M1 3.3L3.4 5.7L7.9 1.2V4.2L3.4 8.7L1 6.3Z" fill="#000"/></svg></div>
<span class="t " style="transform:scaleX(0.8699);left:700.0px;top:310.84px;font-size:12px;line-height:14px;color:#000;">Einganszeit signalisieren</span>
<div style="left:682px;top:328.2px;width:12.3px;height:12.3px;background:#fff;box-sizing:border-box;border-top:1px solid #a0a0a0;border-left:1px solid #a0a0a0;border-right:1px solid #fff;border-bottom:1px solid #fff;"><div style="left:0;top:0;width:10.3px;height:10.3px;box-sizing:border-box;border-top:1px solid #696969;border-left:1px solid #696969;border-right:1px solid #e3e3e3;border-bottom:1px solid #e3e3e3;"></div><svg style="left:1px;top:0.2px" width="9" height="9" viewBox="0 0 9 9"><path d="M1 3.3L3.4 5.7L7.9 1.2V4.2L3.4 8.7L1 6.3Z" fill="#000"/></svg></div>
<span class="t " style="transform:scaleX(0.8783);left:699.7px;top:326.84px;font-size:12px;line-height:14px;color:#000;">Ausgangszeit signalisieren</span>
<div style="left:682px;top:344.2px;width:12.3px;height:12.3px;background:#fff;box-sizing:border-box;border-top:1px solid #a0a0a0;border-left:1px solid #a0a0a0;border-right:1px solid #fff;border-bottom:1px solid #fff;"><div style="left:0;top:0;width:10.3px;height:10.3px;box-sizing:border-box;border-top:1px solid #696969;border-left:1px solid #696969;border-right:1px solid #e3e3e3;border-bottom:1px solid #e3e3e3;"></div><svg style="left:1px;top:0.2px" width="9" height="9" viewBox="0 0 9 9"><path d="M1 3.3L3.4 5.7L7.9 1.2V4.2L3.4 8.7L1 6.3Z" fill="#000"/></svg></div>
<span class="t " style="transform:scaleX(0.8719);left:699.7px;top:342.84px;font-size:12px;line-height:14px;color:#000;">Alarmsignalisierung</span>
<div style="left:682px;top:359.2px;width:12.3px;height:12.3px;background:#fff;box-sizing:border-box;border-top:1px solid #a0a0a0;border-left:1px solid #a0a0a0;border-right:1px solid #fff;border-bottom:1px solid #fff;"><div style="left:0;top:0;width:10.3px;height:10.3px;box-sizing:border-box;border-top:1px solid #696969;border-left:1px solid #696969;border-right:1px solid #e3e3e3;border-bottom:1px solid #e3e3e3;"></div><svg style="left:1px;top:0.2px" width="9" height="9" viewBox="0 0 9 9"><path d="M1 3.3L3.4 5.7L7.9 1.2V4.2L3.4 8.7L1 6.3Z" fill="#000"/></svg></div>
<span class="t " style="transform:scaleX(0.9395);left:700.8px;top:357.84px;font-size:12px;line-height:14px;color:#000;">Tastenton</span>
<div style="left:682px;top:375.2px;width:12.3px;height:12.3px;background:#fff;box-sizing:border-box;border-top:1px solid #a0a0a0;border-left:1px solid #a0a0a0;border-right:1px solid #fff;border-bottom:1px solid #fff;"><div style="left:0;top:0;width:10.3px;height:10.3px;box-sizing:border-box;border-top:1px solid #696969;border-left:1px solid #696969;border-right:1px solid #e3e3e3;border-bottom:1px solid #e3e3e3;"></div></div>
<span class="t " style="transform:scaleX(0.9003);left:700.0px;top:373.84px;font-size:12px;line-height:14px;color:#000;">Stör.Sign. bei Teilsch.</span>
<div style="left:682px;top:391.4px;width:12.3px;height:12.3px;background:#fff;box-sizing:border-box;border-top:1px solid #a0a0a0;border-left:1px solid #a0a0a0;border-right:1px solid #fff;border-bottom:1px solid #fff;"><div style="left:0;top:0;width:10.3px;height:10.3px;box-sizing:border-box;border-top:1px solid #696969;border-left:1px solid #696969;border-right:1px solid #e3e3e3;border-bottom:1px solid #e3e3e3;"></div><svg style="left:1px;top:0.2px" width="9" height="9" viewBox="0 0 9 9"><path d="M1 3.3L3.4 5.7L7.9 1.2V4.2L3.4 8.7L1 6.3Z" fill="#000"/></svg></div>
<span class="t " style="transform:scaleX(0.8858);left:700.0px;top:389.84px;font-size:12px;line-height:14px;color:#000;">Neue Störung sign.</span>
<div style="left:682px;top:407.3px;width:12.3px;height:12.3px;background:#f0f0f0;box-sizing:border-box;border-top:1px solid #a0a0a0;border-left:1px solid #a0a0a0;border-right:1px solid #fff;border-bottom:1px solid #fff;"><div style="left:0;top:0;width:10.3px;height:10.3px;box-sizing:border-box;border-top:1px solid #696969;border-left:1px solid #696969;border-right:1px solid #e3e3e3;border-bottom:1px solid #e3e3e3;"></div><svg style="left:1px;top:0.2px" width="9" height="9" viewBox="0 0 9 9"><path d="M1 3.3L3.4 5.7L7.9 1.2V4.2L3.4 8.7L1 6.3Z" fill="#a0a0a0"/></svg></div>
<span class="t " style="transform:scaleX(0.8909);left:700.0px;top:405.84px;font-size:12px;line-height:14px;color:#a0a0a0;">Kennworteingabe zeigen</span>
<div style="left:682px;top:422.2px;width:12.3px;height:12.3px;background:#f0f0f0;box-sizing:border-box;border-top:1px solid #a0a0a0;border-left:1px solid #a0a0a0;border-right:1px solid #fff;border-bottom:1px solid #fff;"><div style="left:0;top:0;width:10.3px;height:10.3px;box-sizing:border-box;border-top:1px solid #696969;border-left:1px solid #696969;border-right:1px solid #e3e3e3;border-bottom:1px solid #e3e3e3;"></div></div>
<span class="t " style="transform:scaleX(0.8822);left:700.0px;top:420.84px;font-size:12px;line-height:14px;color:#a0a0a0;">Bedienteilnamen zeigen</span>
<div style="left:682px;top:438.2px;width:12.3px;height:12.3px;background:#fff;box-sizing:border-box;border-top:1px solid #a0a0a0;border-left:1px solid #a0a0a0;border-right:1px solid #fff;border-bottom:1px solid #fff;"><div style="left:0;top:0;width:10.3px;height:10.3px;box-sizing:border-box;border-top:1px solid #696969;border-left:1px solid #696969;border-right:1px solid #e3e3e3;border-bottom:1px solid #e3e3e3;"></div></div>
<span class="t " style="transform:scaleX(0.8913);left:699.7px;top:436.84px;font-size:12px;line-height:14px;color:#000;">Ausgangszeitkürzung möglich</span>
<div style="left:682px;top:454.0px;width:12.3px;height:12.3px;background:#fff;box-sizing:border-box;border-top:1px solid #a0a0a0;border-left:1px solid #a0a0a0;border-right:1px solid #fff;border-bottom:1px solid #fff;"><div style="left:0;top:0;width:10.3px;height:10.3px;box-sizing:border-box;border-top:1px solid #696969;border-left:1px solid #696969;border-right:1px solid #e3e3e3;border-bottom:1px solid #e3e3e3;"></div><svg style="left:1px;top:0.2px" width="9" height="9" viewBox="0 0 9 9"><path d="M1 3.3L3.4 5.7L7.9 1.2V4.2L3.4 8.7L1 6.3Z" fill="#000"/></svg></div>
<span class="t " style="transform:scaleX(0.8918);left:701px;top:452.84px;font-size:12px;line-height:14px;color:#000;">Verl. der Linien zeigen</span>
<div style="left:682px;top:470.1px;width:12.3px;height:12.3px;background:#fff;box-sizing:border-box;border-top:1px solid #a0a0a0;border-left:1px solid #a0a0a0;border-right:1px solid #fff;border-bottom:1px solid #fff;"><div style="left:0;top:0;width:10.3px;height:10.3px;box-sizing:border-box;border-top:1px solid #696969;border-left:1px solid #696969;border-right:1px solid #e3e3e3;border-bottom:1px solid #e3e3e3;"></div><svg style="left:1px;top:0.2px" width="9" height="9" viewBox="0 0 9 9"><path d="M1 3.3L3.4 5.7L7.9 1.2V4.2L3.4 8.7L1 6.3Z" fill="#000"/></svg></div>
<span class="t " style="transform:scaleX(0.8972);left:701px;top:468.84px;font-size:12px;line-height:14px;color:#000;">Verzög. Autoscharf. sign.</span>
<div style="left:682px;top:485.4px;width:12.3px;height:12.3px;background:#f0f0f0;box-sizing:border-box;border-top:1px solid #a0a0a0;border-left:1px solid #a0a0a0;border-right:1px solid #fff;border-bottom:1px solid #fff;"><div style="left:0;top:0;width:10.3px;height:10.3px;box-sizing:border-box;border-top:1px solid #696969;border-left:1px solid #696969;border-right:1px solid #e3e3e3;border-bottom:1px solid #e3e3e3;"></div></div>
<span class="t " style="transform:scaleX(0.9017);left:699.7px;top:483.84px;font-size:12px;line-height:14px;color:#a0a0a0;">Auswahl des Anz.Modus</span>
<div style="left:682px;top:501.4px;width:12.3px;height:12.3px;background:#fff;box-sizing:border-box;border-top:1px solid #a0a0a0;border-left:1px solid #a0a0a0;border-right:1px solid #fff;border-bottom:1px solid #fff;"><div style="left:0;top:0;width:10.3px;height:10.3px;box-sizing:border-box;border-top:1px solid #696969;border-left:1px solid #696969;border-right:1px solid #e3e3e3;border-bottom:1px solid #e3e3e3;"></div><svg style="left:1px;top:0.2px" width="9" height="9" viewBox="0 0 9 9"><path d="M1 3.3L3.4 5.7L7.9 1.2V4.2L3.4 8.7L1 6.3Z" fill="#000"/></svg></div>
<span class="t " style="transform:scaleX(0.8898);left:700.0px;top:499.84px;font-size:12px;line-height:14px;color:#000;">Unscharfmeldungen zeigen</span>
<div style="left:682px;top:517.5px;width:12.3px;height:12.3px;background:#fff;box-sizing:border-box;border-top:1px solid #a0a0a0;border-left:1px solid #a0a0a0;border-right:1px solid #fff;border-bottom:1px solid #fff;"><div style="left:0;top:0;width:10.3px;height:10.3px;box-sizing:border-box;border-top:1px solid #696969;border-left:1px solid #696969;border-right:1px solid #e3e3e3;border-bottom:1px solid #e3e3e3;"></div><svg style="left:1px;top:0.2px" width="9" height="9" viewBox="0 0 9 9"><path d="M1 3.3L3.4 5.7L7.9 1.2V4.2L3.4 8.7L1 6.3Z" fill="#000"/></svg></div>
<span class="t " style="transform:scaleX(0.9015);left:700.0px;top:515.84px;font-size:12px;line-height:14px;color:#000;">Meldungen Scharschalten</span>
<div style="left:682px;top:534.2px;width:12.3px;height:12.3px;background:#f0f0f0;box-sizing:border-box;border-top:1px solid #a0a0a0;border-left:1px solid #a0a0a0;border-right:1px solid #fff;border-bottom:1px solid #fff;"><div style="left:0;top:0;width:10.3px;height:10.3px;box-sizing:border-box;border-top:1px solid #696969;border-left:1px solid #696969;border-right:1px solid #e3e3e3;border-bottom:1px solid #e3e3e3;"></div><svg style="left:1px;top:0.2px" width="9" height="9" viewBox="0 0 9 9"><path d="M1 3.3L3.4 5.7L7.9 1.2V4.2L3.4 8.7L1 6.3Z" fill="#a0a0a0"/></svg></div>
<span class="t " style="transform:scaleX(0.9583);left:700.8000000000001px;top:532.84px;font-size:12px;line-height:14px;color:#a0a0a0;font-weight:bold;">RS-Kommunikation</span>
<div style="left:682px;top:550.3px;width:12.3px;height:12.3px;background:#fff;box-sizing:border-box;border-top:1px solid #a0a0a0;border-left:1px solid #a0a0a0;border-right:1px solid #fff;border-bottom:1px solid #fff;"><div style="left:0;top:0;width:10.3px;height:10.3px;box-sizing:border-box;border-top:1px solid #696969;border-left:1px solid #696969;border-right:1px solid #e3e3e3;border-bottom:1px solid #e3e3e3;"></div><svg style="left:1px;top:0.2px" width="9" height="9" viewBox="0 0 9 9"><path d="M1 3.3L3.4 5.7L7.9 1.2V4.2L3.4 8.7L1 6.3Z" fill="#000"/></svg></div>
<span class="t " style="transform:scaleX(0.8945);left:700.0px;top:548.84px;font-size:12px;line-height:14px;color:#000;">Schnelle Steuerung</span>
<div style="left:415px;top:623px;width:254px;height:36px;border:1px solid #a0a0a0;box-sizing:border-box"></div>
<div style="left:416px;top:624px;width:254px;height:36px;border:1px solid #fff;box-sizing:border-box"></div>
<div style="left:415px;top:623px;width:254px;height:36px;border:1px solid #a0a0a0;box-sizing:border-box"></div>
<div style="left:421.5px;top:623px;width:117px;height:2px;background:#f0f0f0"></div>
<span class="t " style="transform:scaleX(0.9333);left:422.7px;top:617.84px;font-size:12px;line-height:14px;color:#000;">Linie113: ''Wej<b style='display:inline-block;position:static;width:2px;height:9px;background:#000;margin:0 1px 0 1px;vertical-align:-1px'></b>cie 113''</span>
<div style="left:424px;top:632.3px;width:11.4px;height:11.4px;border-radius:50%;box-sizing:border-box;background:#fff;border:1px solid;border-color:#808080 #fff #fff #808080;"><div style="left:0;top:0;width:9.4px;height:9.4px;border-radius:50%;box-sizing:border-box;border:1px solid;border-color:#5a5a5a #e3e3e3 #e3e3e3 #5a5a5a;transform:none"></div></div>
<span class="t " style="transform:scaleX(0.8728);left:440.8px;top:630.84px;font-size:12px;line-height:14px;color:#000;">im LCD-Bedienteil</span>
<div style="left:424px;top:644.2px;width:11.4px;height:11.4px;border-radius:50%;box-sizing:border-box;background:#fff;border:1px solid;border-color:#808080 #fff #fff #808080;"><div style="left:0;top:0;width:9.4px;height:9.4px;border-radius:50%;box-sizing:border-box;border:1px solid;border-color:#5a5a5a #e3e3e3 #e3e3e3 #5a5a5a;transform:none"></div><div style="left:3.1px;top:3.1px;width:3.8px;height:3.8px;border-radius:50%;background:#000"></div></div>
<span class="t " style="transform:scaleX(0.9215);left:440.8px;top:642.84px;font-size:12px;line-height:14px;color:#000;">Nicht belegt</span>
<div style="left:676px;top:623px;width:233px;height:36px;border:1px solid #a0a0a0;box-sizing:border-box"></div>
<div style="left:677px;top:624px;width:233px;height:36px;border:1px solid #fff;box-sizing:border-box"></div>
<div style="left:676px;top:623px;width:233px;height:36px;border:1px solid #a0a0a0;box-sizing:border-box"></div>
<div style="left:682.3px;top:623px;width:116.5px;height:2px;background:#f0f0f0"></div>
<span class="t " style="transform:scaleX(0.9292);left:683.5px;top:617.84px;font-size:12px;line-height:14px;color:#000;">Linie114: ''Wej<b style='display:inline-block;position:static;width:2px;height:9px;background:#000;margin:0 1px 0 1px;vertical-align:-1px'></b>cie 114''</span>
<div style="left:685px;top:632.8px;width:11.4px;height:11.4px;border-radius:50%;box-sizing:border-box;background:#fff;border:1px solid;border-color:#808080 #fff #fff #808080;"><div style="left:0;top:0;width:9.4px;height:9.4px;border-radius:50%;box-sizing:border-box;border:1px solid;border-color:#5a5a5a #e3e3e3 #e3e3e3 #5a5a5a;transform:none"></div></div>
<span class="t " style="transform:scaleX(0.8728);left:702.0px;top:630.84px;font-size:12px;line-height:14px;color:#000;">im LCD-Bedienteil</span>
<div style="left:685px;top:644.4px;width:11.4px;height:11.4px;border-radius:50%;box-sizing:border-box;background:#fff;border:1px solid;border-color:#808080 #fff #fff #808080;"><div style="left:0;top:0;width:9.4px;height:9.4px;border-radius:50%;box-sizing:border-box;border:1px solid;border-color:#5a5a5a #e3e3e3 #e3e3e3 #5a5a5a;transform:none"></div><div style="left:3.1px;top:3.1px;width:3.8px;height:3.8px;border-radius:50%;background:#000"></div></div>
<span class="t " style="transform:scaleX(0.9215);left:702.0px;top:642.84px;font-size:12px;line-height:14px;color:#000;">Nicht belegt</span>
<div style="left:415px;top:665px;width:494px;height:27px;border:1px solid #a0a0a0;box-sizing:border-box"></div>
<div style="left:416px;top:666px;width:494px;height:27px;border:1px solid #fff;box-sizing:border-box"></div>
<div style="left:415px;top:665px;width:494px;height:27px;border:1px solid #a0a0a0;box-sizing:border-box"></div>
<div style="left:420.8px;top:665px;width:138.5px;height:2px;background:#f0f0f0"></div>
<span class="t " style="transform:scaleX(0.9012);left:422.8px;top:658.84px;font-size:12px;line-height:14px;color:#000;">Autohintergrundbeleuchtung</span>
<div style="left:421.3px;top:674px;width:11.4px;height:11.4px;border-radius:50%;box-sizing:border-box;background:#fff;border:1px solid;border-color:#808080 #fff #fff #808080;"><div style="left:0;top:0;width:9.4px;height:9.4px;border-radius:50%;box-sizing:border-box;border:1px solid;border-color:#5a5a5a #e3e3e3 #e3e3e3 #5a5a5a;transform:none"></div></div>
<span class="t " style="transform:scaleX(0.8699);left:437.8px;top:673.84px;font-size:12px;line-height:14px;color:#000;">Eingangszeit im Bereich:</span>
<div style="left:574px;top:667px;width:36px;height:21px;background:#fff;box-sizing:border-box;border-top:1px solid #a0a0a0;border-left:1px solid #a0a0a0;border-right:1px solid #fff;border-bottom:1px solid #fff;"><div style="left:0;top:0;width:34px;height:19px;box-sizing:border-box;border-top:1px solid #696969;border-left:1px solid #696969;border-right:1px solid #e3e3e3;border-bottom:1px solid #e3e3e3;"></div><div style="left:18px;top:1px;width:14px;height:8px;box-sizing:border-box;background:#f0f0f0;border-top:1px solid #fff;border-left:1px solid #fff;border-right:1px solid #696969;border-bottom:1px solid #696969"><svg style="left:2.5px;top:1.0px" width="7" height="4" viewBox="0 0 7 4"><polygon points="3.5,0 7,4 0,4" fill="#000"/></svg></div><div style="left:18px;top:9px;width:14px;height:8px;box-sizing:border-box;background:#f0f0f0;border-top:1px solid #fff;border-left:1px solid #fff;border-right:1px solid #696969;border-bottom:1px solid #696969"><svg style="left:2.5px;top:1.0px" width="7" height="4" viewBox="0 0 7 4"><polygon points="0,0 7,0 3.5,4" fill="#000"/></svg></div></div>
<span class="t " style="left:577.2px;top:669.84px;font-size:12px;line-height:14px;color:#a0a0a0;">1</span>
<div style="left:629px;top:674px;width:11.4px;height:11.4px;border-radius:50%;box-sizing:border-box;background:#fff;border:1px solid;border-color:#808080 #fff #fff #808080;"><div style="left:0;top:0;width:9.4px;height:9.4px;border-radius:50%;box-sizing:border-box;border:1px solid;border-color:#5a5a5a #e3e3e3 #e3e3e3 #5a5a5a;transform:none"></div></div>
<span class="t " style="transform:scaleX(0.8817);left:646.0px;top:673.84px;font-size:12px;line-height:14px;color:#000;">Linienverletzung:</span>
<div style="left:738.6px;top:667px;width:43.4px;height:21px;background:#fff;box-sizing:border-box;border-top:1px solid #a0a0a0;border-left:1px solid #a0a0a0;border-right:1px solid #fff;border-bottom:1px solid #fff;"><div style="left:0;top:0;width:41.4px;height:19px;box-sizing:border-box;border-top:1px solid #696969;border-left:1px solid #696969;border-right:1px solid #e3e3e3;border-bottom:1px solid #e3e3e3;"></div><div style="left:25.4px;top:1px;width:14px;height:8px;box-sizing:border-box;background:#f0f0f0;border-top:1px solid #fff;border-left:1px solid #fff;border-right:1px solid #696969;border-bottom:1px solid #696969"><svg style="left:2.5px;top:1.0px" width="7" height="4" viewBox="0 0 7 4"><polygon points="3.5,0 7,4 0,4" fill="#000"/></svg></div><div style="left:25.4px;top:9px;width:14px;height:8px;box-sizing:border-box;background:#f0f0f0;border-top:1px solid #fff;border-left:1px solid #fff;border-right:1px solid #696969;border-bottom:1px solid #696969"><svg style="left:2.5px;top:1.0px" width="7" height="4" viewBox="0 0 7 4"><polygon points="0,0 7,0 3.5,4" fill="#000"/></svg></div></div>
<span class="t " style="left:741.8000000000001px;top:669.84px;font-size:12px;line-height:14px;color:#a0a0a0;">64</span>
<div style="left:806px;top:672.2px;width:11.4px;height:11.4px;border-radius:50%;box-sizing:border-box;background:#fff;border:1px solid;border-color:#808080 #fff #fff #808080;"><div style="left:0;top:0;width:9.4px;height:9.4px;border-radius:50%;box-sizing:border-box;border:1px solid;border-color:#5a5a5a #e3e3e3 #e3e3e3 #5a5a5a;transform:none"></div><div style="left:3.1px;top:3.1px;width:3.8px;height:3.8px;border-radius:50%;background:#000"></div></div>
<span class="t " style="transform:scaleX(0.8924);left:823.2px;top:671.84px;font-size:12px;line-height:14px;color:#000;">Keine</span>
<div style="left:415px;top:695px;width:358px;height:32px;border:1px solid #a0a0a0;box-sizing:border-box"></div>
<div style="left:416px;top:696px;width:358px;height:32px;border:1px solid #fff;box-sizing:border-box"></div>
<div style="left:415px;top:695px;width:358px;height:32px;border:1px solid #a0a0a0;box-sizing:border-box"></div>
<span class="t " style="transform:scaleX(0.8638);left:420.8px;top:702.84px;font-size:12px;line-height:14px;color:#000;">Sabot. alarmiert im Bereich:</span>
<div style="left:595px;top:700px;width:162px;height:20px;background:#fff;box-sizing:border-box;border-top:1px solid #a0a0a0;border-left:1px solid #a0a0a0;border-right:1px solid #fff;border-bottom:1px solid #fff;"><div style="left:0;top:0;width:160px;height:18px;box-sizing:border-box;border-top:1px solid #696969;border-left:1px solid #696969;border-right:1px solid #e3e3e3;border-bottom:1px solid #e3e3e3;"></div><div style="left:143px;top:1px;width:17px;height:17px;box-sizing:border-box;background:#f0f0f0;border-top:1px solid #fff;border-left:1px solid #fff;border-right:1px solid #696969;border-bottom:1px solid #696969"><div style="left:0;top:0;width:14px;height:14px;border-right:1px solid #a0a0a0;border-bottom:1px solid #a0a0a0"></div><svg style="left:4.0px;top:5.0px" width="7" height="4" viewBox="0 0 7 4"><polygon points="0,0 7,0 3.5,4" fill="#000"/></svg></div></div>
<span class="t " style="transform:scaleX(0.9052);left:600.1px;top:702.84px;font-size:12px;line-height:14px;color:#000;">1: Sabotage</span>
<div style="left:781px;top:696px;width:126px;height:31px;box-sizing:border-box;background:#f0f0f0;border-top:1px solid #fff;border-left:1px solid #fff;border-right:1px solid #696969;border-bottom:1px solid #696969"><div style="left:0;top:0;width:123px;height:28px;border-right:1px solid #888;border-bottom:1px solid #888"></div></div>
<span class="t " style="transform:scaleX(0.8929);left:834.6px;top:704.84px;font-size:12px;line-height:14px;color:#000;">Kopieren</span>
<svg style="left:814px;top:705px" width="16" height="14" viewBox="0 0 16 14">
<path d="M0.5 0.5H6.5L8.5 2.5V9.5H0.5Z" fill="#fff" stroke="#000" stroke-width="1"/>
<path d="M2 3.5H6M2 5.5H6M2 7.5H5" stroke="#000080" stroke-width="1"/>
<path d="M6.5 3.5H12.5L14.5 5.5V13.5H6.5Z" fill="#fff" stroke="#000" stroke-width="1"/>
<path d="M8 6.5H12M8 8.5H13M8 10.5H13M8 12H13" stroke="#000080" stroke-width="1"/>
</svg>
<div style="left:415px;top:731px;width:494px;height:33px;border:1px solid #a0a0a0;box-sizing:border-box"></div>
<div style="left:416px;top:732px;width:494px;height:33px;border:1px solid #fff;box-sizing:border-box"></div>
<div style="left:415px;top:731px;width:494px;height:33px;border:1px solid #a0a0a0;box-sizing:border-box"></div>
<span class="t " style="transform:scaleX(0.8844);left:420.8px;top:739.84px;font-size:12px;line-height:14px;color:#000;">Stromv.Quelle:</span>
<div style="left:595px;top:737px;width:302.5px;height:20px;background:#fff;box-sizing:border-box;border-top:1px solid #a0a0a0;border-left:1px solid #a0a0a0;border-right:1px solid #fff;border-bottom:1px solid #fff;"><div style="left:0;top:0;width:300.5px;height:18px;box-sizing:border-box;border-top:1px solid #696969;border-left:1px solid #696969;border-right:1px solid #e3e3e3;border-bottom:1px solid #e3e3e3;"></div><div style="left:283.5px;top:1px;width:17px;height:17px;box-sizing:border-box;background:#f0f0f0;border-top:1px solid #fff;border-left:1px solid #fff;border-right:1px solid #696969;border-bottom:1px solid #696969"><div style="left:0;top:0;width:14px;height:14px;border-right:1px solid #a0a0a0;border-bottom:1px solid #a0a0a0"></div><svg style="left:4.0px;top:5.0px" width="7" height="4" viewBox="0 0 7 4"><polygon points="0,0 7,0 3.5,4" fill="#000"/></svg></div></div>
<span class="t " style="transform:scaleX(0.8824);left:598.2px;top:739.84px;font-size:12px;line-height:14px;color:#000;">Hauptplatine.</span>
<svg style="left:3px;top:57px" width="16" height="14" viewBox="0 0 16 14"><rect x="0" y="0" width="16" height="14" fill="#000"/><rect x="1" y="1" width="14" height="7" fill="#0cf010"/><rect x="1" y="8" width="14" height="5" fill="#3fc873"/><rect x="2" y="5" width="4" height="4" fill="#2c5a2c"/><rect x="3" y="6" width="2" height="2" fill="#9be09b"/><rect x="7" y="5" width="1" height="4" fill="#2c5a2c"/><rect x="8" y="6" width="1" height="2" fill="#2c5a2c"/><rect x="10" y="5" width="4" height="4" fill="#2c5a2c"/><rect x="11" y="6" width="2" height="2" fill="#9be09b"/><rect x="12" y="2" width="2" height="2" fill="#7a5a10"/></svg>
<svg style="left:22px;top:72px" width="16" height="16" viewBox="0 0 16 16"><path d="M2.5 0.8L0.6 3.5L2.5 6.2M5.2 1.5L3.8 3.5L5.2 5.5M13.5 0.8L15.4 3.5L13.5 6.2M10.8 1.5L12.2 3.5L10.8 5.5" stroke="#0000c8" stroke-width="1" fill="none"/><rect x="7" y="0" width="1" height="8" fill="#000"/><rect x="9" y="2" width="1" height="6" fill="#000"/><path d="M4.5 6.5H9.5V12.5H4.5Z" fill="#e8dc70" stroke="#000"/><path d="M6.5 8.5H12.5V13L10.5 15.5H8.5L6.5 13Z" fill="#e8dc70" stroke="#000"/><rect x="9" y="10" width="2" height="2" fill="#406060"/></svg>
<span class="t " style="transform:scaleX(0.8430);left:21.7px;top:90.45px;font-size:8.8px;line-height:11px;color:#000080;-webkit-text-stroke:0.3px;">GSM</span>
<svg style="left:22px;top:104px" width="16" height="15" viewBox="0 0 16 15"><path d="M2.5 0.5H11.5L15.5 3.5V14.5H3.5L0.5 11.5V2.5Z" fill="#f0e488" stroke="#000"/><path d="M3.5 3.5H15.5M3.5 3.5V14.5" stroke="#000" fill="none"/><rect x="5" y="5" width="7" height="2" fill="#222"/><rect x="6" y="5.5" width="5" height="1" fill="#f8f0b0"/><rect x="5" y="9" width="2" height="2" fill="#111"/><rect x="8" y="9" width="2" height="2" fill="#111"/><rect x="11" y="9" width="2" height="2" fill="#111"/><rect x="5" y="12" width="2" height="2" fill="#111"/><rect x="8" y="12" width="2" height="2" fill="#111"/><rect x="11" y="12" width="2" height="2" fill="#111"/><rect x="13" y="5" width="1" height="1" fill="#e03020"/><rect x="13" y="8" width="1" height="1" fill="#a0d020"/><rect x="13" y="10" width="1" height="1" fill="#a0d020"/></svg>
<svg style="left:42px;top:122px" width="15" height="12" viewBox="0 0 15 12"><rect x="0" y="0" width="15" height="12" fill="#111"/><rect x="1" y="1" width="13" height="10" fill="#8a9498"/><rect x="2" y="2" width="11" height="8" fill="#a9c9d3"/><rect x="6" y="5" width="1" height="1" fill="#103040"/><rect x="8" y="4" width="1" height="1" fill="#103040"/><rect x="10" y="4" width="1" height="1" fill="#206080"/><rect x="5" y="7" width="1" height="1" fill="#206080"/><rect x="9" y="6" width="1" height="1" fill="#e8f8ff"/></svg>
<svg style="left:41px;top:136px" width="16" height="14" viewBox="0 0 16 14"><rect x="0" y="2" width="15" height="9" fill="#1a3a1a"/><rect x="1" y="3" width="13" height="7" fill="#2f8f45"/><rect x="3" y="0" width="7" height="6" fill="#22c4ff"/><rect x="4" y="1" width="1" height="4" fill="#000090"/><rect x="6" y="1" width="1" height="4" fill="#000090"/><rect x="7" y="1" width="2" height="1" fill="#000090"/><rect x="8" y="2" width="1" height="1" fill="#000090"/><rect x="7" y="3" width="2" height="1" fill="#000090"/><rect x="1" y="5" width="2" height="2" fill="#a03020"/><rect x="2" y="8" width="5" height="1" fill="#c8e8c8"/><rect x="9" y="6" width="6" height="5" fill="#1a3a1a"/><rect x="10" y="5" width="4" height="7" fill="#60d050"/><rect x="11" y="7" width="2" height="3" fill="#d8f060"/><rect x="8" y="11" width="6" height="2" fill="#1a3a1a"/><rect x="9" y="10" width="4" height="3" fill="#90e040"/><rect x="15" y="4" width="1" height="5" fill="#1a3a1a"/></svg>
<svg style="left:41px;top:152px" width="16" height="16" viewBox="0 0 16 16"><path d="M1.5 0.5H11.5L12.5 1.5V11.5H0.5V1.5Z" fill="#f8e850" stroke="#000"/><rect x="2" y="2" width="7" height="2" fill="#000"/><rect x="3" y="2.5" width="6" height="1" fill="#fff"/><rect x="10" y="2" width="1" height="1" fill="#604000"/><rect x="2" y="6" width="2" height="2" fill="#000"/><rect x="2.6" y="6.5" width="1" height="1" fill="#f8e850"/><rect x="2" y="9" width="2" height="2" fill="#000"/><rect x="2.6" y="9.5" width="1" height="1" fill="#f8e850"/><path d="M5.5 4.5H14.5V12.5H5.5Z" fill="#a8b0b8" stroke="#000"/><rect x="7" y="6" width="6" height="5" fill="#101010"/><rect x="8" y="7" width="4" height="3" fill="#40a8a0"/><path d="M4.5 12.5H15.5V15.5H5.5Z" fill="#f0f0f0" stroke="#000"/><rect x="7" y="14" width="2" height="1" fill="#a09020"/><rect x="10" y="14" width="3" height="1" fill="#808080"/></svg>
<svg style="left:41px;top:168px" width="16" height="16" viewBox="0 0 16 16"><path d="M1.5 0.5H11.5L12.5 1.5V11.5H0.5V1.5Z" fill="#f8e850" stroke="#000"/><rect x="2" y="2" width="7" height="2" fill="#000"/><rect x="3" y="2.5" width="6" height="1" fill="#fff"/><rect x="10" y="2" width="1" height="1" fill="#604000"/><rect x="2" y="6" width="2" height="2" fill="#000"/><rect x="2.6" y="6.5" width="1" height="1" fill="#f8e850"/><rect x="2" y="9" width="2" height="2" fill="#000"/><rect x="2.6" y="9.5" width="1" height="1" fill="#f8e850"/><path d="M5.5 4.5H14.5V12.5H5.5Z" fill="#a8b0b8" stroke="#000"/><rect x="7" y="6" width="6" height="5" fill="#101010"/><rect x="8" y="7" width="4" height="3" fill="#40a8a0"/><path d="M4.5 12.5H15.5V15.5H5.5Z" fill="#f0f0f0" stroke="#000"/><rect x="7" y="14" width="2" height="1" fill="#a09020"/><rect x="10" y="14" width="3" height="1" fill="#808080"/></svg>
<svg style="left:22px;top:183px" width="17" height="17" viewBox="0 0 17 17"><path d="M0.5 1.5H3.5V13M3.5 13.5L6 13.5L8 11H12.5V2" stroke="#e02010" stroke-width="1" fill="none"/><ellipse cx="3.6" cy="4.2" rx="2.6" ry="1.6" fill="#50d030" stroke="#101010" stroke-width="1"/><rect x="3.1" y="5.800000000000001" width="3.4" height="0.8" fill="#101010"/><ellipse cx="3.6" cy="8.8" rx="2.6" ry="1.6" fill="#50d030" stroke="#101010" stroke-width="1"/><rect x="3.1" y="10.4" width="3.4" height="0.8" fill="#101010"/><ellipse cx="3.6" cy="13.4" rx="2.6" ry="1.6" fill="#50d030" stroke="#101010" stroke-width="1"/><rect x="3.1" y="15.0" width="3.4" height="0.8" fill="#101010"/><ellipse cx="12.4" cy="2.2" rx="2.6" ry="1.6" fill="#50d030" stroke="#101010" stroke-width="1"/><rect x="11.9" y="3.8000000000000003" width="3.4" height="0.8" fill="#101010"/><ellipse cx="12.4" cy="6.8" rx="2.6" ry="1.6" fill="#50d030" stroke="#101010" stroke-width="1"/><rect x="11.9" y="8.4" width="3.4" height="0.8" fill="#101010"/><ellipse cx="12.4" cy="11.4" rx="2.6" ry="1.6" fill="#50d030" stroke="#101010" stroke-width="1"/><rect x="11.9" y="13.0" width="3.4" height="0.8" fill="#101010"/></svg>
<svg style="left:41px;top:200px" width="16" height="16" viewBox="0 0 16 16"><path d="M1.5 0.5H5.5V12.5L4 14.5H1.5ZM9.5 1.5H13.5V13L14.5 15.5H10.5L9.5 13Z" fill="#e8e8f8" stroke="#c8c070" stroke-width="1"/><rect x="3" y="1" width="2" height="3" fill="#60b0e8"/><rect x="11" y="2" width="2" height="3" fill="#60b0e8"/><rect x="4" y="4" width="3" height="9" fill="#4060ff"/><rect x="9" y="4" width="3" height="9" fill="#4060ff"/><path d="M0 12.5H3.5V4.5H6.5V12.5H9.5V4.5H12.5V12.5H15" stroke="#000080" stroke-width="1.2" fill="none"/><rect x="5" y="6" width="1" height="1" fill="#fff"/><rect x="5" y="9" width="1" height="1" fill="#fff"/><rect x="11" y="6" width="1" height="1" fill="#fff"/><rect x="11" y="9" width="1" height="1" fill="#fff"/></svg>
<svg style="left:41px;top:216px" width="16" height="16" viewBox="0 0 16 16"><path d="M1.5 0.5H5.5V12.5L4 14.5H1.5ZM9.5 1.5H13.5V13L14.5 15.5H10.5L9.5 13Z" fill="#e8e8f8" stroke="#c8c070" stroke-width="1"/><rect x="3" y="1" width="2" height="3" fill="#60b0e8"/><rect x="11" y="2" width="2" height="3" fill="#60b0e8"/><rect x="4" y="4" width="3" height="9" fill="#4060ff"/><rect x="9" y="4" width="3" height="9" fill="#4060ff"/><path d="M0 12.5H3.5V4.5H6.5V12.5H9.5V4.5H12.5V12.5H15" stroke="#000080" stroke-width="1.2" fill="none"/><rect x="5" y="6" width="1" height="1" fill="#fff"/><rect x="5" y="9" width="1" height="1" fill="#fff"/><rect x="11" y="6" width="1" height="1" fill="#fff"/><rect x="11" y="9" width="1" height="1" fill="#fff"/></svg>
<svg style="left:41px;top:232px" width="16" height="16" viewBox="0 0 16 16"><path d="M1.5 0.5H5.5V12.5L4 14.5H1.5ZM9.5 1.5H13.5V13L14.5 15.5H10.5L9.5 13Z" fill="#e8e8f8" stroke="#c8c070" stroke-width="1"/><rect x="3" y="1" width="2" height="3" fill="#60b0e8"/><rect x="11" y="2" width="2" height="3" fill="#60b0e8"/><rect x="4" y="4" width="3" height="9" fill="#4060ff"/><rect x="9" y="4" width="3" height="9" fill="#4060ff"/><path d="M0 12.5H3.5V4.5H6.5V12.5H9.5V4.5H12.5V12.5H15" stroke="#000080" stroke-width="1.2" fill="none"/><rect x="5" y="6" width="1" height="1" fill="#fff"/><rect x="5" y="9" width="1" height="1" fill="#fff"/><rect x="11" y="6" width="1" height="1" fill="#fff"/><rect x="11" y="9" width="1" height="1" fill="#fff"/></svg>
<svg style="left:41px;top:249px" width="15" height="13" viewBox="0 0 15 13"><rect x="0" y="0" width="15" height="13" fill="#000070"/><rect x="1" y="1" width="13" height="3" fill="#f0e8a0"/><rect x="1" y="5" width="13" height="3" fill="#f4f4ff"/><rect x="1" y="9" width="13" height="3" fill="#f0e8a0"/><rect x="2" y="2" width="1" height="1" fill="#000"/><rect x="4" y="2" width="1" height="1" fill="#000"/><rect x="6" y="2" width="1" height="1" fill="#000"/><rect x="8" y="2" width="1" height="1" fill="#000"/><rect x="10" y="2" width="1" height="1" fill="#000"/><rect x="12" y="2" width="1" height="1" fill="#000"/><rect x="2" y="10" width="1" height="1" fill="#000"/><rect x="4" y="10" width="1" height="1" fill="#000"/><rect x="6" y="10" width="1" height="1" fill="#000"/><rect x="8" y="10" width="1" height="1" fill="#000"/><rect x="10" y="10" width="1" height="1" fill="#000"/><rect x="12" y="10" width="1" height="1" fill="#000"/><rect x="2" y="5" width="3" height="3" fill="#000070"/><rect x="3" y="6" width="2" height="1" fill="#fff"/><rect x="6" y="6" width="3" height="1" fill="#000070"/><rect x="10" y="5" width="2" height="3" fill="#8090d0"/><rect x="12" y="6" width="1" height="1" fill="#000070"/></svg>
</body></html>
